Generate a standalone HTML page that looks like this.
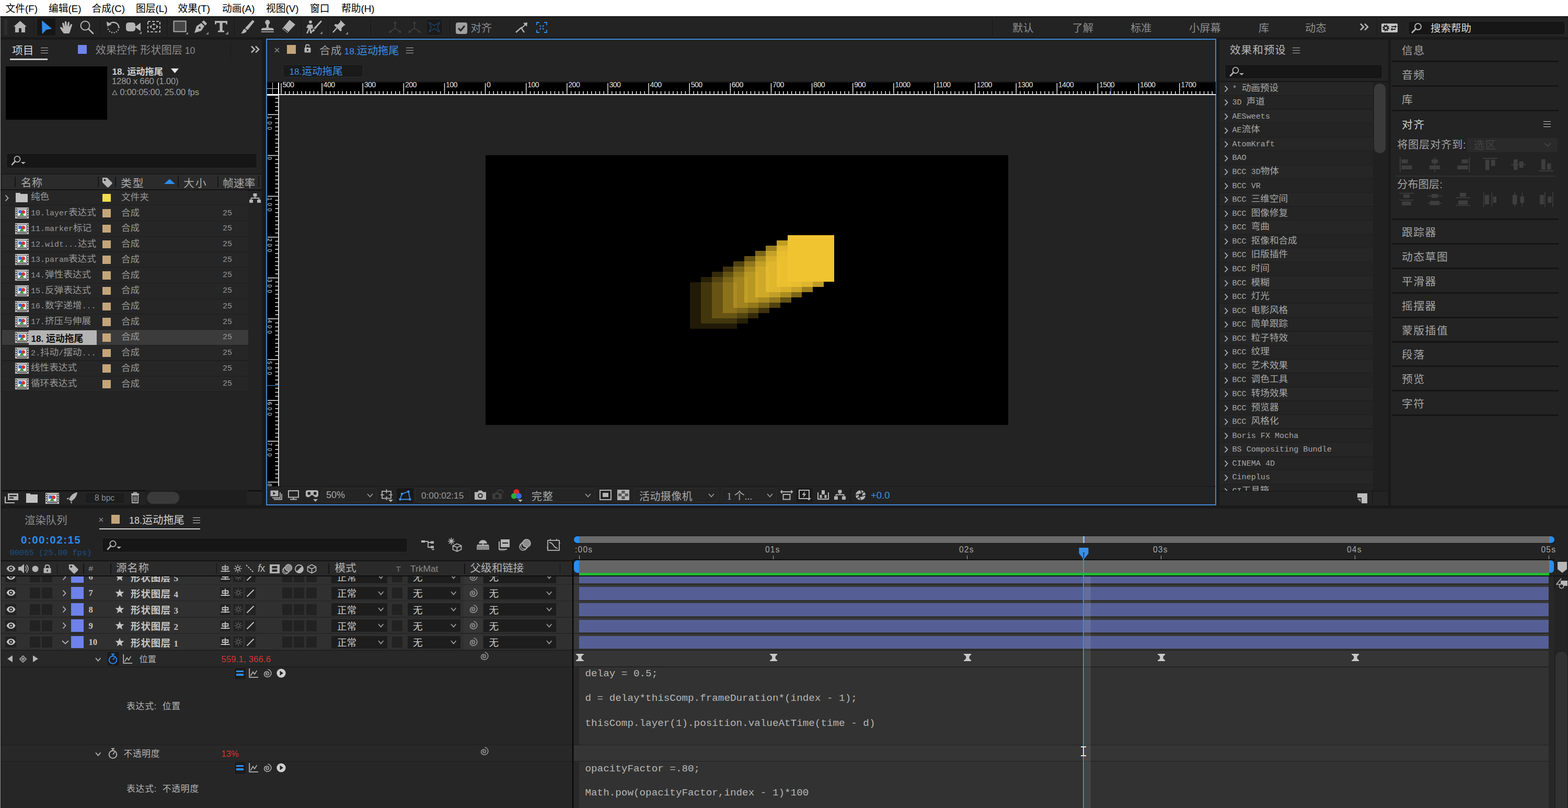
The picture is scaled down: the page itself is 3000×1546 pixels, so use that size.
<!DOCTYPE html>
<html><head><meta charset="utf-8"><title>After Effects</title>
<style>
html,body{margin:0;padding:0;}
html{width:3000px;height:1546px;overflow:hidden;}
body{width:3000px;height:1546px;overflow:hidden;background:#1a1a1a;position:relative;font-family:"Liberation Sans","Noto Sans CJK SC",sans-serif;}
div,svg{position:absolute;box-sizing:border-box;}
.t{white-space:nowrap;overflow:visible;}
.ls{font-family:"Liberation Sans","Noto Sans CJK SC",sans-serif;}
.lm{font-family:"Liberation Mono","Noto Sans CJK SC",monospace;}
.lf{font-family:"Liberation Serif","Noto Sans CJK SC",serif;}
span{font-family:inherit;}
.c{line-height:1;white-space:nowrap;}
</style></head><body>

<div style="left:0.0px;top:0.0px;width:3000.0px;height:32.0px;background:#ffffff;"></div>
<div class="t ls" style="left:10.5px;top:5.0px;height:24.4px;line-height:24.4px;font-size:18.75px;color:#000000;">文件(F)</div>
<div class="t ls" style="left:93.0px;top:5.0px;height:24.4px;line-height:24.4px;font-size:18.75px;color:#000000;">编辑(E)</div>
<div class="t ls" style="left:175.5px;top:5.0px;height:24.4px;line-height:24.4px;font-size:18.75px;color:#000000;">合成(C)</div>
<div class="t ls" style="left:260.0px;top:5.0px;height:24.4px;line-height:24.4px;font-size:18.75px;color:#000000;">图层(L)</div>
<div class="t ls" style="left:340.5px;top:5.0px;height:24.4px;line-height:24.4px;font-size:18.75px;color:#000000;">效果(T)</div>
<div class="t ls" style="left:425.0px;top:5.0px;height:24.4px;line-height:24.4px;font-size:18.75px;color:#000000;">动画(A)</div>
<div class="t ls" style="left:509.0px;top:5.0px;height:24.4px;line-height:24.4px;font-size:18.75px;color:#000000;">视图(V)</div>
<div class="t ls" style="left:593.0px;top:5.0px;height:24.4px;line-height:24.4px;font-size:18.75px;color:#000000;">窗口</div>
<div class="t ls" style="left:653.0px;top:5.0px;height:24.4px;line-height:24.4px;font-size:18.75px;color:#000000;">帮助(H)</div>
<div style="left:0.0px;top:32.0px;width:3000.0px;height:38.5px;background:#232323;"></div>
<div style="left:0.0px;top:31.4px;width:3000.0px;height:1.2px;background:#141414;"></div>
<div style="left:0.0px;top:32.0px;width:1.2px;height:1514.0px;background:#9a9a9a;"></div>
<div style="left:8.0px;top:38.0px;width:5.5px;height:1.1px;background:#404040;"></div>
<div style="left:8.0px;top:41.0px;width:5.5px;height:1.1px;background:#404040;"></div>
<div style="left:8.0px;top:43.9px;width:5.5px;height:1.1px;background:#404040;"></div>
<div style="left:8.0px;top:46.9px;width:5.5px;height:1.1px;background:#404040;"></div>
<div style="left:8.0px;top:49.8px;width:5.5px;height:1.1px;background:#404040;"></div>
<div style="left:8.0px;top:52.8px;width:5.5px;height:1.1px;background:#404040;"></div>
<div style="left:8.0px;top:55.7px;width:5.5px;height:1.1px;background:#404040;"></div>
<div style="left:8.0px;top:58.7px;width:5.5px;height:1.1px;background:#404040;"></div>
<div style="left:8.0px;top:61.6px;width:5.5px;height:1.1px;background:#404040;"></div>
<div style="left:8.0px;top:64.5px;width:5.5px;height:1.1px;background:#404040;"></div>
<div style="left:64.0px;top:35.0px;width:2.0px;height:33.0px;background:#1b1b1b;"></div>
<div style="left:66.0px;top:35.0px;width:1.0px;height:33.0px;background:#2b2b2b;"></div>
<div style="left:191.0px;top:35.0px;width:2.0px;height:33.0px;background:#1b1b1b;"></div>
<div style="left:193.0px;top:35.0px;width:1.0px;height:33.0px;background:#2b2b2b;"></div>
<div style="left:319.0px;top:35.0px;width:2.0px;height:33.0px;background:#1b1b1b;"></div>
<div style="left:321.0px;top:35.0px;width:1.0px;height:33.0px;background:#2b2b2b;"></div>
<div style="left:448.0px;top:35.0px;width:2.0px;height:33.0px;background:#1b1b1b;"></div>
<div style="left:450.0px;top:35.0px;width:1.0px;height:33.0px;background:#2b2b2b;"></div>
<div style="left:575.5px;top:35.0px;width:2.0px;height:33.0px;background:#1b1b1b;"></div>
<div style="left:577.5px;top:35.0px;width:1.0px;height:33.0px;background:#2b2b2b;"></div>
<div style="left:627.0px;top:35.0px;width:2.0px;height:33.0px;background:#1b1b1b;"></div>
<div style="left:629.0px;top:35.0px;width:1.0px;height:33.0px;background:#2b2b2b;"></div>
<div style="left:708.5px;top:35.0px;width:2.0px;height:33.0px;background:#1b1b1b;"></div>
<div style="left:710.5px;top:35.0px;width:1.0px;height:33.0px;background:#2b2b2b;"></div>
<div style="left:860.0px;top:35.0px;width:2.0px;height:33.0px;background:#1b1b1b;"></div>
<div style="left:862.0px;top:35.0px;width:1.0px;height:33.0px;background:#2b2b2b;"></div>
<div style="left:1899.0px;top:35.0px;width:2.0px;height:33.0px;background:#1b1b1b;"></div>
<div style="left:1901.0px;top:35.0px;width:1.0px;height:33.0px;background:#2b2b2b;"></div>
<div style="left:2634.0px;top:35.0px;width:2.0px;height:33.0px;background:#1b1b1b;"></div>
<div style="left:2636.0px;top:35.0px;width:1.0px;height:33.0px;background:#2b2b2b;"></div>
<svg style="left:25.0px;top:39.0px;" width="27" height="24" viewBox="0 0 27 24"><path d="M13.5 1 L1 12 L4 12 L4 23 L11 23 L11 15 L16 15 L16 23 L23 23 L23 12 L26 12 Z" fill="#b4b4b4"/></svg>
<div style="left:71.0px;top:35.0px;width:35.0px;height:33.0px;background:#161616;border-radius:3px;"></div>
<svg style="left:79.0px;top:38.0px;" width="22" height="29" viewBox="0 0 22 29"><path d="M1.1 1 L20.3 17 L9.4 18.9 L1.7 27.2 Z" fill="#2d8ceb"/></svg>
<svg style="left:114.0px;top:39.0px;" width="26" height="26" viewBox="0 0 26 26"><path d="M8 25 C5 21 2 17 1 14 C1 12 3 12 5 14 L7 16 L5 6 C5 4 8 4 8.5 6 L10 12 L10 3 C10 1 13 1 13.3 3 L14 12 L16 4 C16.5 2 19 2.5 19 4.5 L18 13 L21 8 C22 6 24.5 7 24 9 L21 18 C20 22 19 24 18 25 Z" fill="#b4b4b4"/></svg>
<svg style="left:152.0px;top:38.0px;" width="28" height="28" viewBox="0 0 28 28"><circle cx="11" cy="11" r="8.5" fill="none" stroke="#b4b4b4" stroke-width="1.9"/><path d="M17.5 17.5 L26 26" stroke="#b4b4b4" stroke-width="2.8" stroke-linecap="round"/></svg>
<svg style="left:203.0px;top:38.0px;" width="28" height="28" viewBox="0 0 28 28"><path d="M5 10 A10.5 10.5 0 0 1 24.5 14" fill="none" stroke="#b4b4b4" stroke-width="2.4"/><path d="M24.5 14 A10.5 10.5 0 0 1 3.5 14" fill="none" stroke="#b4b4b4" stroke-width="2.4" stroke-dasharray="2 2.6"/><path d="M1 3 L2 12.5 L10.5 9 Z" fill="#b4b4b4"/></svg>
<svg style="left:240.0px;top:40.0px;" width="32" height="26" viewBox="0 0 32 26"><rect x="1" y="3" width="18" height="17" rx="5" fill="#b4b4b4"/><path d="M18 11.5 L29 3.5 L29 19.5 Z" fill="#b4b4b4"/><path d="M31 20 L31 25 L26 25 Z" fill="#8a8a8a"/></svg>
<svg style="left:281.0px;top:38.0px;" width="28" height="27" viewBox="0 0 28 27"><rect x="2" y="3" width="23" height="20" fill="none" stroke="#b4b4b4" stroke-width="2" stroke-dasharray="5 3"/><path d="M13.5 6 L17 10 L10 10 Z M13.5 20 L17 16 L10 16 Z M5 13 L9 9.5 L9 16.5 Z M22 13 L18 9.5 L18 16.5 Z" fill="#b4b4b4"/></svg>
<svg style="left:331.0px;top:39.0px;" width="30" height="28" viewBox="0 0 30 28"><rect x="1.5" y="1.5" width="23" height="20" fill="#454545" stroke="#b4b4b4" stroke-width="1.8"/><path d="M29 22 L29 27 L24 27 Z" fill="#8a8a8a"/></svg>
<svg style="left:370.0px;top:38.0px;" width="30" height="29" viewBox="0 0 30 29"><path d="M2 25 L6 12 L15 6 L21 12 L15 21 Z" fill="#b4b4b4"/><path d="M16 4 L20 1 L26 7 L23 11 Z" fill="#b4b4b4"/><circle cx="12" cy="15" r="2" fill="#232323"/><path d="M29 23 L29 28 L24 28 Z" fill="#8a8a8a"/></svg>
<svg style="left:411.0px;top:39.5px;" width="24" height="22" viewBox="0 0 24 22"><path d="M0 0 H24 V6.5 H21.2 V3.8 H14.6 V18.6 H18 V21.5 H6 V18.6 H9.4 V3.8 H2.8 V6.5 H0 Z" fill="#b4b4b4"/></svg>
<svg style="left:431.0px;top:60.0px;" width="6" height="6" viewBox="0 0 6 6"><path d="M6 0 L6 6 L0 6 Z" fill="#8a8a8a"/></svg>
<svg style="left:460.0px;top:38.0px;" width="27" height="28" viewBox="0 0 27 28"><path d="M23.2 0.3 L26.8 3 L13.8 19.6 L8.8 16 Z" fill="#b4b4b4"/><path d="M8 17 L12 20.5 C11 25 6 26 1 26 C4 24 4 19 8 17 Z" fill="#b4b4b4"/></svg>
<svg style="left:499.0px;top:38.0px;" width="26" height="24" viewBox="0 0 26 24"><circle cx="12.8" cy="4.7" r="4.6" fill="#b4b4b4"/><path d="M10.3 8 L15.3 8 L14.6 12 C14.6 14 15.2 15 17.5 15.6 L8 15.6 C10.4 15 11 14 11 12 Z" fill="#b4b4b4"/><path d="M0.8 20 C0.8 16.6 2.6 15.4 5 15.4 L20.6 15.4 C23 15.4 24.8 16.6 24.8 20 Z" fill="#b4b4b4"/><rect x="0.8" y="22" width="24" height="1.7" fill="#b4b4b4"/></svg>
<svg style="left:537.0px;top:36.0px;" width="30" height="30" viewBox="0 0 30 30"><path d="M17 2 L28 11 L13 27 L3 19 Z" fill="#b4b4b4"/><path d="M5.5 18.5 L13.5 25" stroke="#232323" stroke-width="1.8"/></svg>
<svg style="left:585.0px;top:38.0px;" width="32" height="28" viewBox="0 0 32 28"><circle cx="9" cy="4" r="3" fill="#b4b4b4"/><path d="M4 9 L13 9 L14 16 L10 17 L12 26 L8.5 26 L7 18 L4 26 L1 26 L5 16 L1 15 Z" fill="#b4b4b4"/><path d="M29 1 L31 3 L18 18 L15 16 Z" fill="#b4b4b4"/><path d="M14.5 17 L17.5 19.5 C16 23 13 23 10 23 C12.5 21.5 12.5 18.5 14.5 17Z" fill="#b4b4b4"/><path d="M32 22 L32 27 L27 27 Z" fill="#8a8a8a"/></svg>
<svg style="left:636.0px;top:37.0px;" width="31" height="30" viewBox="0 0 31 30"><path d="M15 1 L25 11 L22 12 L17 17 L18 21 L15.5 23 L3 11 L6 9 L10 10 L15 5 Z" fill="#b4b4b4"/><path d="M8.5 16.5 L1 25" stroke="#b4b4b4" stroke-width="2.4"/><path d="M30 24 L30 29 L25 29 Z" fill="#8a8a8a"/></svg>
<svg style="left:743.0px;top:40.0px;" width="26" height="25" viewBox="0 0 26 25"><path d="M13 2 L13 14 L3 21 M13 14 L23 21" fill="none" stroke="#3e3e3e" stroke-width="1.8"/><path d="M13 0 L16 5 L10 5 Z M1 23 L3 17.5 L6.5 22 Z M25 23 L23 17.5 L19.5 22 Z" fill="#3e3e3e"/></svg>
<svg style="left:780.0px;top:40.0px;" width="26" height="25" viewBox="0 0 26 25"><path d="M13 2 L13 14 L3 21 M13 14 L23 21" fill="none" stroke="#3e3e3e" stroke-width="1.8"/><path d="M13 0 L16 5 L10 5 Z M1 23 L3 17.5 L6.5 22 Z M25 23 L23 17.5 L19.5 22 Z" fill="#3e3e3e"/></svg>
<div style="left:814.5px;top:35.5px;width:32.0px;height:32.0px;background:#1a1a1a;border-radius:3px;border:1px solid #2c2c2c;"></div>
<svg style="left:819.0px;top:40.0px;" width="24" height="23" viewBox="0 0 24 23"><path d="M2 3 L12 9 L22 3 L18 12 L22 21 L12 15 L2 21 L6 12 Z" fill="none" stroke="#1d3f63" stroke-width="1.8"/></svg>
<div style="left:871.5px;top:43.0px;width:22.5px;height:22.0px;background:#a0a0a0;border-radius:4px;"></div>
<svg style="left:875.0px;top:47.0px;" width="16" height="14" viewBox="0 0 16 14"><path d="M2 7 L6.5 11.5 L14 2.5" fill="none" stroke="#232323" stroke-width="3"/></svg>
<div class="t ls" style="left:900.5px;top:41.1px;height:26.4px;line-height:26.4px;font-size:20.3px;color:#8c8c8c;">对齐</div>
<svg style="left:986.0px;top:42.0px;" width="24" height="22" viewBox="0 0 24 22"><path d="M1 20 L11 11 L17 20" fill="none" stroke="#b4b4b4" stroke-width="2.4"/><path d="M12 12 L20 4" stroke="#b4b4b4" stroke-width="2.2"/><path d="M23 1 L22 9 L15 2 Z" fill="#b4b4b4"/></svg>
<svg style="left:1026.0px;top:42.0px;" width="21" height="21" viewBox="0 0 21 21"><path d="M1 6 L1 1 L6 1 M15 1 L20 1 L20 6 M20 15 L20 20 L15 20 M6 20 L1 20 L1 15" fill="none" stroke="#2d8ceb" stroke-width="1.8"/><path d="M6.5 6.5 L9 9 M14.5 6.5 L12 9 M6.5 14.5 L9 12 M14.5 14.5 L12 12" stroke="#2d8ceb" stroke-width="1.8"/></svg>
<div class="t ls" style="left:1937.0px;top:41.1px;height:26.4px;line-height:26.4px;font-size:20.3px;color:#8c8c8c;">默认</div>
<div class="t ls" style="left:2051.5px;top:41.1px;height:26.4px;line-height:26.4px;font-size:20.3px;color:#8c8c8c;">了解</div>
<div class="t ls" style="left:2163.0px;top:41.1px;height:26.4px;line-height:26.4px;font-size:20.3px;color:#8c8c8c;">标准</div>
<div class="t ls" style="left:2275.0px;top:41.1px;height:26.4px;line-height:26.4px;font-size:20.3px;color:#8c8c8c;">小屏幕</div>
<div class="t ls" style="left:2408.0px;top:41.1px;height:26.4px;line-height:26.4px;font-size:20.3px;color:#8c8c8c;">库</div>
<div class="t ls" style="left:2497.0px;top:41.1px;height:26.4px;line-height:26.4px;font-size:20.3px;color:#8c8c8c;">动态</div>
<svg style="left:2601.0px;top:44.0px;" width="19" height="15" viewBox="0 0 19 15"><path d="M2 1.5 L8 7.5 L2 13.5 M10 1.5 L16 7.5 L10 13.5" fill="none" stroke="#b4b4b4" stroke-width="2.6"/></svg>
<div style="left:2642.5px;top:44.5px;width:31.5px;height:17.0px;background:#c4c4c4;border-radius:2px;"></div>
<svg style="left:2642.5px;top:44.5px;" width="32" height="17" viewBox="0 0 32 17"><circle cx="8.5" cy="8.5" r="3.6" fill="none" stroke="#232323" stroke-width="2.6"/><circle cx="8.5" cy="8.5" r="5.6" fill="none" stroke="#232323" stroke-width="2" stroke-dasharray="2.2 2.2"/><path d="M19 6 L27 6 M27 11 L19 11" stroke="#232323" stroke-width="2.2"/><path d="M26 3 L29.5 6 L26 9 Z M21 8 L17.5 11 L21 14 Z" fill="#232323"/></svg>
<div style="left:2693.5px;top:39.5px;width:301.5px;height:27.0px;background:#161616;border-radius:5px;border:1px solid #2e2e2e;"></div>
<svg style="left:2700.0px;top:43.0px;" width="22" height="21" viewBox="0 0 22 21"><circle cx="13" cy="8" r="6" fill="none" stroke="#b4b4b4" stroke-width="2"/><path d="M8.8 12.2 L2 19" stroke="#b4b4b4" stroke-width="3" stroke-linecap="round"/></svg>
<div class="t ls" style="left:2737.0px;top:42.0px;height:25.4px;line-height:25.4px;font-size:19.5px;color:#d8d8d8;">搜索帮助</div>
<div style="left:1.2px;top:76.0px;width:499.8px;height:889.5px;background:#232323;"></div>
<div class="t ls" style="left:23.0px;top:82.9px;height:27.0px;line-height:27.0px;font-size:20.8px;color:#d6d6d6;">项目</div>
<div style="left:78.0px;top:90.6px;width:13.5px;height:1.8px;background:#b0b0b0;"></div>
<div style="left:78.0px;top:95.6px;width:13.5px;height:1.8px;background:#b0b0b0;"></div>
<div style="left:78.0px;top:100.6px;width:13.5px;height:1.8px;background:#b0b0b0;"></div>
<div style="left:19.0px;top:111.5px;width:72.0px;height:3.0px;background:#d0d0d0;"></div>
<div style="left:149.0px;top:86.0px;width:16.5px;height:16.5px;background:#6f84ec;"></div>
<div class="t ls" style="left:182.5px;top:85.8px;height:22.9px;line-height:22.9px;font-size:17.6px;color:#8a8a8a;"><span class="c" style="font-size:20.2px">效果控件</span> <span class="c" style="font-size:20.2px">形状图层</span> 10</div>
<div style="left:440.0px;top:80.0px;width:1.5px;height:32.0px;background:#1e1e1e;"></div>
<svg style="left:479.0px;top:87.0px;" width="19" height="15" viewBox="0 0 19 15"><path d="M2 1.5 L8 7.5 L2 13.5 M10 1.5 L16 7.5 L10 13.5" fill="none" stroke="#b4b4b4" stroke-width="2.6"/></svg>
<div style="left:11.0px;top:127.0px;width:194.0px;height:101.5px;background:#000000;"></div>
<div class="t ls" style="left:214.5px;top:125.8px;height:22.4px;line-height:22.4px;font-size:17.2px;color:#cfcfcf;font-weight:bold;">18. 运动拖尾</div>
<svg style="left:327.0px;top:131.0px;" width="15" height="9" viewBox="0 0 15 9"><path d="M0 0 L15 0 L7.5 9 Z" fill="#e8e8e8"/></svg>
<div class="t ls" style="left:214.0px;top:144.6px;height:21.8px;line-height:21.8px;font-size:16.8px;color:#9c9c9c;letter-spacing:-0.25px;">1280 x 660 (1.00)</div>
<div class="t ls" style="left:214.0px;top:165.6px;height:21.8px;line-height:21.8px;font-size:16.8px;color:#9c9c9c;letter-spacing:-0.3px;"><svg width="11" height="10" viewBox="0 0 11 10" style="position:static;vertical-align:-0.5px"><path d="M5.5 1.2 L10 9.2 L1 9.2 Z" fill="none" stroke="#9c9c9c" stroke-width="1.1"/></svg> 0:00:05:00, 25.00 fps</div>
<div style="left:12.0px;top:293.0px;width:480.0px;height:28.5px;background:#161616;border-radius:5px;border:1px solid #2c2c2c;"></div>
<svg style="left:21.0px;top:297.0px;" width="30" height="20" viewBox="0 0 30 20"><circle cx="12" cy="7.5" r="5.6" fill="none" stroke="#b4b4b4" stroke-width="1.8"/><path d="M8 11.5 L2 18" stroke="#b4b4b4" stroke-width="2.6" stroke-linecap="round"/><path d="M19 13 L28 13 L23.5 17 Z" fill="#b4b4b4"/></svg>
<div style="left:1.2px;top:332.0px;width:499.8px;height:2.0px;background:#1a1a1a;"></div>
<div style="left:4.0px;top:334.0px;width:496.0px;height:28.0px;background:#2b2b2b;"></div>
<div style="left:1.2px;top:362.0px;width:499.8px;height:2.5px;background:#151515;"></div>
<div style="left:28.0px;top:338.0px;width:1.5px;height:20.0px;background:#161616;"></div>
<div style="left:187.0px;top:338.0px;width:1.5px;height:20.0px;background:#161616;"></div>
<div style="left:220.0px;top:338.0px;width:1.5px;height:20.0px;background:#161616;"></div>
<div style="left:340.0px;top:338.0px;width:1.5px;height:20.0px;background:#161616;"></div>
<div style="left:416.0px;top:338.0px;width:1.5px;height:20.0px;background:#161616;"></div>
<div style="left:494.0px;top:338.0px;width:1.5px;height:20.0px;background:#161616;"></div>
<div class="t ls" style="left:40.0px;top:337.1px;height:26.4px;line-height:26.4px;font-size:20.3px;color:#a8a8a8;letter-spacing:0.5px;">名称</div>
<svg style="left:193.5px;top:337.5px;" width="22.0" height="22.0" viewBox="0 0 22 22"><path d="M2 2 L11 2 L20 11 C21 12 21 13 20 14 L14 20 C13 21 12 21 11 20 L2 11 Z" fill="#b4b4b4"/><circle cx="6.5" cy="6.5" r="2" fill="#2b2b2b"/></svg>
<div class="t ls" style="left:231.0px;top:336.9px;height:27.0px;line-height:27.0px;font-size:20.8px;color:#a8a8a8;letter-spacing:2px;">类型</div>
<svg style="left:314.0px;top:342.0px;" width="21" height="10" viewBox="0 0 21 10"><path d="M0 10 L10.5 0.5 L21 10 Z" fill="#2d8ceb"/></svg>
<div class="t ls" style="left:351.0px;top:336.9px;height:27.0px;line-height:27.0px;font-size:20.8px;color:#a8a8a8;letter-spacing:2px;">大小</div>
<div class="t ls" style="left:426.0px;top:336.9px;height:27.0px;line-height:27.0px;font-size:20.8px;color:#a8a8a8;">帧速率</div>
<div style="left:4.0px;top:363.6px;width:470.0px;height:29.7px;background:#262626;"></div>
<div style="left:4.0px;top:392.2px;width:470.0px;height:1.2px;background:#1e1e1e;"></div>
<svg style="left:9.0px;top:371.5px;" width="8" height="14" viewBox="0 0 8 14"><path d="M1.5 1.5 L6.5 7 L1.5 12.5" fill="none" stroke="#b4b4b4" stroke-width="1.8"/></svg>
<svg style="left:29.5px;top:367.5px;" width="23" height="19" viewBox="0 0 23 19"><path d="M0 1 L9 1 L9 3 L23 3 L23 19 L0 19 Z" fill="#c2c2c2"/></svg>
<div style="left:196.0px;top:370.5px;width:15.5px;height:15.5px;background:#f0dc4e;"></div>
<div class="t lm" style="left:59.0px;top:369.4px;height:19.5px;line-height:19.5px;font-size:15px;color:#989898;"><span class="c" style="font-size:17.6px">纯色</span></div>
<div class="t lm" style="left:232.0px;top:367.9px;height:22.4px;line-height:22.4px;font-size:17.2px;color:#989898;"><span class="c" style="font-size:17.6px">文件夹</span></div>
<svg style="left:477.0px;top:369.5px;" width="22" height="19" viewBox="0 0 22 19"><rect x="7.5" y="0" width="7" height="6" fill="#b4b4b4"/><rect x="0" y="12" width="7" height="6" fill="#b4b4b4"/><rect x="15" y="12" width="7" height="6" fill="#b4b4b4"/><path d="M11 6 L11 9 M3.5 12 L3.5 9 L18.5 9 L18.5 12" fill="none" stroke="#b4b4b4" stroke-width="1.8"/></svg>
<div style="left:4.0px;top:393.4px;width:470.0px;height:29.7px;background:#262626;"></div>
<div style="left:4.0px;top:421.9px;width:470.0px;height:1.2px;background:#1e1e1e;"></div>
<svg style="left:28.5px;top:397.2px;" width="26" height="21" viewBox="0 0 26 21"><rect x="0" y="0" width="26" height="21" fill="#c8c8c8"/><rect x="4.5" y="3" width="17" height="13.5" fill="#f2f2f2" stroke="#555" stroke-width="1"/><rect x="1" y="1.5" width="2" height="2.5" fill="#333"/><rect x="1" y="6" width="2" height="2.5" fill="#333"/><rect x="1" y="10.5" width="2" height="2.5" fill="#333"/><rect x="1" y="15" width="2" height="2.5" fill="#333"/><rect x="23" y="1.5" width="2" height="2.5" fill="#333"/><rect x="23" y="6" width="2" height="2.5" fill="#333"/><rect x="23" y="10.5" width="2" height="2.5" fill="#333"/><rect x="23" y="15" width="2" height="2.5" fill="#333"/><rect x="6.5" y="5" width="6" height="6" fill="#2a6fd6"/><circle cx="15.5" cy="8.5" r="3.6" fill="#d83030"/><path d="M8 15.5 L12.5 9.5 L17 15.5 Z" fill="#2f9a3a"/><rect x="3" y="18" width="20" height="1.6" fill="#444"/></svg>
<div style="left:196.0px;top:400.2px;width:15.5px;height:15.5px;background:#c4a57a;"></div>
<div class="t lm" style="left:59.0px;top:399.1px;height:19.5px;line-height:19.5px;font-size:15px;color:#989898;">10.layer<span class="c" style="font-size:17.6px">表达式</span></div>
<div class="t lm" style="left:232.0px;top:397.6px;height:22.4px;line-height:22.4px;font-size:17.2px;color:#989898;"><span class="c" style="font-size:17.6px">合成</span></div>
<div class="t lm" style="left:426.0px;top:398.5px;height:19.5px;line-height:19.5px;font-size:15px;color:#989898;">25</div>
<div style="left:4.0px;top:423.1px;width:470.0px;height:29.7px;background:#262626;"></div>
<div style="left:4.0px;top:451.6px;width:470.0px;height:1.2px;background:#1e1e1e;"></div>
<svg style="left:28.5px;top:426.9px;" width="26" height="21" viewBox="0 0 26 21"><rect x="0" y="0" width="26" height="21" fill="#c8c8c8"/><rect x="4.5" y="3" width="17" height="13.5" fill="#f2f2f2" stroke="#555" stroke-width="1"/><rect x="1" y="1.5" width="2" height="2.5" fill="#333"/><rect x="1" y="6" width="2" height="2.5" fill="#333"/><rect x="1" y="10.5" width="2" height="2.5" fill="#333"/><rect x="1" y="15" width="2" height="2.5" fill="#333"/><rect x="23" y="1.5" width="2" height="2.5" fill="#333"/><rect x="23" y="6" width="2" height="2.5" fill="#333"/><rect x="23" y="10.5" width="2" height="2.5" fill="#333"/><rect x="23" y="15" width="2" height="2.5" fill="#333"/><rect x="6.5" y="5" width="6" height="6" fill="#2a6fd6"/><circle cx="15.5" cy="8.5" r="3.6" fill="#d83030"/><path d="M8 15.5 L12.5 9.5 L17 15.5 Z" fill="#2f9a3a"/><rect x="3" y="18" width="20" height="1.6" fill="#444"/></svg>
<div style="left:196.0px;top:429.9px;width:15.5px;height:15.5px;background:#c4a57a;"></div>
<div class="t lm" style="left:59.0px;top:428.8px;height:19.5px;line-height:19.5px;font-size:15px;color:#989898;">11.marker<span class="c" style="font-size:17.6px">标记</span></div>
<div class="t lm" style="left:232.0px;top:427.3px;height:22.4px;line-height:22.4px;font-size:17.2px;color:#989898;"><span class="c" style="font-size:17.6px">合成</span></div>
<div class="t lm" style="left:426.0px;top:428.2px;height:19.5px;line-height:19.5px;font-size:15px;color:#989898;">25</div>
<div style="left:4.0px;top:452.8px;width:470.0px;height:29.7px;background:#262626;"></div>
<div style="left:4.0px;top:481.3px;width:470.0px;height:1.2px;background:#1e1e1e;"></div>
<svg style="left:28.5px;top:456.7px;" width="26" height="21" viewBox="0 0 26 21"><rect x="0" y="0" width="26" height="21" fill="#c8c8c8"/><rect x="4.5" y="3" width="17" height="13.5" fill="#f2f2f2" stroke="#555" stroke-width="1"/><rect x="1" y="1.5" width="2" height="2.5" fill="#333"/><rect x="1" y="6" width="2" height="2.5" fill="#333"/><rect x="1" y="10.5" width="2" height="2.5" fill="#333"/><rect x="1" y="15" width="2" height="2.5" fill="#333"/><rect x="23" y="1.5" width="2" height="2.5" fill="#333"/><rect x="23" y="6" width="2" height="2.5" fill="#333"/><rect x="23" y="10.5" width="2" height="2.5" fill="#333"/><rect x="23" y="15" width="2" height="2.5" fill="#333"/><rect x="6.5" y="5" width="6" height="6" fill="#2a6fd6"/><circle cx="15.5" cy="8.5" r="3.6" fill="#d83030"/><path d="M8 15.5 L12.5 9.5 L17 15.5 Z" fill="#2f9a3a"/><rect x="3" y="18" width="20" height="1.6" fill="#444"/></svg>
<div style="left:196.0px;top:459.7px;width:15.5px;height:15.5px;background:#c4a57a;"></div>
<div class="t lm" style="left:59.0px;top:458.5px;height:19.5px;line-height:19.5px;font-size:15px;color:#989898;">12.widt...<span class="c" style="font-size:17.6px">达式</span></div>
<div class="t lm" style="left:232.0px;top:457.1px;height:22.4px;line-height:22.4px;font-size:17.2px;color:#989898;"><span class="c" style="font-size:17.6px">合成</span></div>
<div class="t lm" style="left:426.0px;top:457.9px;height:19.5px;line-height:19.5px;font-size:15px;color:#989898;">25</div>
<div style="left:4.0px;top:482.5px;width:470.0px;height:29.7px;background:#262626;"></div>
<div style="left:4.0px;top:511.0px;width:470.0px;height:1.2px;background:#1e1e1e;"></div>
<svg style="left:28.5px;top:486.4px;" width="26" height="21" viewBox="0 0 26 21"><rect x="0" y="0" width="26" height="21" fill="#c8c8c8"/><rect x="4.5" y="3" width="17" height="13.5" fill="#f2f2f2" stroke="#555" stroke-width="1"/><rect x="1" y="1.5" width="2" height="2.5" fill="#333"/><rect x="1" y="6" width="2" height="2.5" fill="#333"/><rect x="1" y="10.5" width="2" height="2.5" fill="#333"/><rect x="1" y="15" width="2" height="2.5" fill="#333"/><rect x="23" y="1.5" width="2" height="2.5" fill="#333"/><rect x="23" y="6" width="2" height="2.5" fill="#333"/><rect x="23" y="10.5" width="2" height="2.5" fill="#333"/><rect x="23" y="15" width="2" height="2.5" fill="#333"/><rect x="6.5" y="5" width="6" height="6" fill="#2a6fd6"/><circle cx="15.5" cy="8.5" r="3.6" fill="#d83030"/><path d="M8 15.5 L12.5 9.5 L17 15.5 Z" fill="#2f9a3a"/><rect x="3" y="18" width="20" height="1.6" fill="#444"/></svg>
<div style="left:196.0px;top:489.4px;width:15.5px;height:15.5px;background:#c4a57a;"></div>
<div class="t lm" style="left:59.0px;top:488.2px;height:19.5px;line-height:19.5px;font-size:15px;color:#989898;">13.param<span class="c" style="font-size:17.6px">表达式</span></div>
<div class="t lm" style="left:232.0px;top:486.8px;height:22.4px;line-height:22.4px;font-size:17.2px;color:#989898;"><span class="c" style="font-size:17.6px">合成</span></div>
<div class="t lm" style="left:426.0px;top:487.6px;height:19.5px;line-height:19.5px;font-size:15px;color:#989898;">25</div>
<div style="left:4.0px;top:512.2px;width:470.0px;height:29.7px;background:#262626;"></div>
<div style="left:4.0px;top:540.8px;width:470.0px;height:1.2px;background:#1e1e1e;"></div>
<svg style="left:28.5px;top:516.1px;" width="26" height="21" viewBox="0 0 26 21"><rect x="0" y="0" width="26" height="21" fill="#c8c8c8"/><rect x="4.5" y="3" width="17" height="13.5" fill="#f2f2f2" stroke="#555" stroke-width="1"/><rect x="1" y="1.5" width="2" height="2.5" fill="#333"/><rect x="1" y="6" width="2" height="2.5" fill="#333"/><rect x="1" y="10.5" width="2" height="2.5" fill="#333"/><rect x="1" y="15" width="2" height="2.5" fill="#333"/><rect x="23" y="1.5" width="2" height="2.5" fill="#333"/><rect x="23" y="6" width="2" height="2.5" fill="#333"/><rect x="23" y="10.5" width="2" height="2.5" fill="#333"/><rect x="23" y="15" width="2" height="2.5" fill="#333"/><rect x="6.5" y="5" width="6" height="6" fill="#2a6fd6"/><circle cx="15.5" cy="8.5" r="3.6" fill="#d83030"/><path d="M8 15.5 L12.5 9.5 L17 15.5 Z" fill="#2f9a3a"/><rect x="3" y="18" width="20" height="1.6" fill="#444"/></svg>
<div style="left:196.0px;top:519.1px;width:15.5px;height:15.5px;background:#c4a57a;"></div>
<div class="t lm" style="left:59.0px;top:518.0px;height:19.5px;line-height:19.5px;font-size:15px;color:#989898;">14.<span class="c" style="font-size:17.6px">弹性表达式</span></div>
<div class="t lm" style="left:232.0px;top:516.5px;height:22.4px;line-height:22.4px;font-size:17.2px;color:#989898;"><span class="c" style="font-size:17.6px">合成</span></div>
<div class="t lm" style="left:426.0px;top:517.4px;height:19.5px;line-height:19.5px;font-size:15px;color:#989898;">25</div>
<div style="left:4.0px;top:542.0px;width:470.0px;height:29.7px;background:#262626;"></div>
<div style="left:4.0px;top:570.5px;width:470.0px;height:1.2px;background:#1e1e1e;"></div>
<svg style="left:28.5px;top:545.8px;" width="26" height="21" viewBox="0 0 26 21"><rect x="0" y="0" width="26" height="21" fill="#c8c8c8"/><rect x="4.5" y="3" width="17" height="13.5" fill="#f2f2f2" stroke="#555" stroke-width="1"/><rect x="1" y="1.5" width="2" height="2.5" fill="#333"/><rect x="1" y="6" width="2" height="2.5" fill="#333"/><rect x="1" y="10.5" width="2" height="2.5" fill="#333"/><rect x="1" y="15" width="2" height="2.5" fill="#333"/><rect x="23" y="1.5" width="2" height="2.5" fill="#333"/><rect x="23" y="6" width="2" height="2.5" fill="#333"/><rect x="23" y="10.5" width="2" height="2.5" fill="#333"/><rect x="23" y="15" width="2" height="2.5" fill="#333"/><rect x="6.5" y="5" width="6" height="6" fill="#2a6fd6"/><circle cx="15.5" cy="8.5" r="3.6" fill="#d83030"/><path d="M8 15.5 L12.5 9.5 L17 15.5 Z" fill="#2f9a3a"/><rect x="3" y="18" width="20" height="1.6" fill="#444"/></svg>
<div style="left:196.0px;top:548.8px;width:15.5px;height:15.5px;background:#c4a57a;"></div>
<div class="t lm" style="left:59.0px;top:547.7px;height:19.5px;line-height:19.5px;font-size:15px;color:#989898;">15.<span class="c" style="font-size:17.6px">反弹表达式</span></div>
<div class="t lm" style="left:232.0px;top:546.2px;height:22.4px;line-height:22.4px;font-size:17.2px;color:#989898;"><span class="c" style="font-size:17.6px">合成</span></div>
<div class="t lm" style="left:426.0px;top:547.1px;height:19.5px;line-height:19.5px;font-size:15px;color:#989898;">25</div>
<div style="left:4.0px;top:571.7px;width:470.0px;height:29.7px;background:#262626;"></div>
<div style="left:4.0px;top:600.2px;width:470.0px;height:1.2px;background:#1e1e1e;"></div>
<svg style="left:28.5px;top:575.5px;" width="26" height="21" viewBox="0 0 26 21"><rect x="0" y="0" width="26" height="21" fill="#c8c8c8"/><rect x="4.5" y="3" width="17" height="13.5" fill="#f2f2f2" stroke="#555" stroke-width="1"/><rect x="1" y="1.5" width="2" height="2.5" fill="#333"/><rect x="1" y="6" width="2" height="2.5" fill="#333"/><rect x="1" y="10.5" width="2" height="2.5" fill="#333"/><rect x="1" y="15" width="2" height="2.5" fill="#333"/><rect x="23" y="1.5" width="2" height="2.5" fill="#333"/><rect x="23" y="6" width="2" height="2.5" fill="#333"/><rect x="23" y="10.5" width="2" height="2.5" fill="#333"/><rect x="23" y="15" width="2" height="2.5" fill="#333"/><rect x="6.5" y="5" width="6" height="6" fill="#2a6fd6"/><circle cx="15.5" cy="8.5" r="3.6" fill="#d83030"/><path d="M8 15.5 L12.5 9.5 L17 15.5 Z" fill="#2f9a3a"/><rect x="3" y="18" width="20" height="1.6" fill="#444"/></svg>
<div style="left:196.0px;top:578.5px;width:15.5px;height:15.5px;background:#c4a57a;"></div>
<div class="t lm" style="left:59.0px;top:577.4px;height:19.5px;line-height:19.5px;font-size:15px;color:#989898;">16.<span class="c" style="font-size:17.6px">数字递增</span>...</div>
<div class="t lm" style="left:232.0px;top:575.9px;height:22.4px;line-height:22.4px;font-size:17.2px;color:#989898;"><span class="c" style="font-size:17.6px">合成</span></div>
<div class="t lm" style="left:426.0px;top:576.8px;height:19.5px;line-height:19.5px;font-size:15px;color:#989898;">25</div>
<div style="left:4.0px;top:601.4px;width:470.0px;height:29.7px;background:#262626;"></div>
<div style="left:4.0px;top:629.9px;width:470.0px;height:1.2px;background:#1e1e1e;"></div>
<svg style="left:28.5px;top:605.3px;" width="26" height="21" viewBox="0 0 26 21"><rect x="0" y="0" width="26" height="21" fill="#c8c8c8"/><rect x="4.5" y="3" width="17" height="13.5" fill="#f2f2f2" stroke="#555" stroke-width="1"/><rect x="1" y="1.5" width="2" height="2.5" fill="#333"/><rect x="1" y="6" width="2" height="2.5" fill="#333"/><rect x="1" y="10.5" width="2" height="2.5" fill="#333"/><rect x="1" y="15" width="2" height="2.5" fill="#333"/><rect x="23" y="1.5" width="2" height="2.5" fill="#333"/><rect x="23" y="6" width="2" height="2.5" fill="#333"/><rect x="23" y="10.5" width="2" height="2.5" fill="#333"/><rect x="23" y="15" width="2" height="2.5" fill="#333"/><rect x="6.5" y="5" width="6" height="6" fill="#2a6fd6"/><circle cx="15.5" cy="8.5" r="3.6" fill="#d83030"/><path d="M8 15.5 L12.5 9.5 L17 15.5 Z" fill="#2f9a3a"/><rect x="3" y="18" width="20" height="1.6" fill="#444"/></svg>
<div style="left:196.0px;top:608.3px;width:15.5px;height:15.5px;background:#c4a57a;"></div>
<div class="t lm" style="left:59.0px;top:607.1px;height:19.5px;line-height:19.5px;font-size:15px;color:#989898;">17.<span class="c" style="font-size:17.6px">挤压与伸展</span></div>
<div class="t lm" style="left:232.0px;top:605.7px;height:22.4px;line-height:22.4px;font-size:17.2px;color:#989898;"><span class="c" style="font-size:17.6px">合成</span></div>
<div class="t lm" style="left:426.0px;top:606.5px;height:19.5px;line-height:19.5px;font-size:15px;color:#989898;">25</div>
<div style="left:4.0px;top:631.1px;width:471.0px;height:29.7px;background:#3b3b3b;"></div>
<div style="left:4.0px;top:659.6px;width:470.0px;height:1.2px;background:#1e1e1e;"></div>
<svg style="left:28.5px;top:635.0px;" width="26" height="21" viewBox="0 0 26 21"><rect x="0" y="0" width="26" height="21" fill="#c8c8c8"/><rect x="4.5" y="3" width="17" height="13.5" fill="#f2f2f2" stroke="#555" stroke-width="1"/><rect x="1" y="1.5" width="2" height="2.5" fill="#333"/><rect x="1" y="6" width="2" height="2.5" fill="#333"/><rect x="1" y="10.5" width="2" height="2.5" fill="#333"/><rect x="1" y="15" width="2" height="2.5" fill="#333"/><rect x="23" y="1.5" width="2" height="2.5" fill="#333"/><rect x="23" y="6" width="2" height="2.5" fill="#333"/><rect x="23" y="10.5" width="2" height="2.5" fill="#333"/><rect x="23" y="15" width="2" height="2.5" fill="#333"/><rect x="6.5" y="5" width="6" height="6" fill="#2a6fd6"/><circle cx="15.5" cy="8.5" r="3.6" fill="#d83030"/><path d="M8 15.5 L12.5 9.5 L17 15.5 Z" fill="#2f9a3a"/><rect x="3" y="18" width="20" height="1.6" fill="#444"/></svg>
<div style="left:196.0px;top:638.0px;width:15.5px;height:15.5px;background:#c4a57a;"></div>
<div style="left:55.0px;top:631.6px;width:130.0px;height:28.2px;background:#b4b4b4;"></div>
<div class="t ls" style="left:59.5px;top:636.6px;height:22.4px;line-height:22.4px;font-size:17.2px;color:#0a0a0a;font-weight:bold;">18. <span class="c" style="font-size:17.8px">运动拖尾</span></div>
<div class="t lm" style="left:232.0px;top:635.4px;height:22.4px;line-height:22.4px;font-size:17.2px;color:#989898;"><span class="c" style="font-size:17.6px">合成</span></div>
<div class="t lm" style="left:426.0px;top:636.2px;height:19.5px;line-height:19.5px;font-size:15px;color:#989898;">25</div>
<div style="left:4.0px;top:660.8px;width:470.0px;height:29.7px;background:#262626;"></div>
<div style="left:4.0px;top:689.4px;width:470.0px;height:1.2px;background:#1e1e1e;"></div>
<svg style="left:28.5px;top:664.7px;" width="26" height="21" viewBox="0 0 26 21"><rect x="0" y="0" width="26" height="21" fill="#c8c8c8"/><rect x="4.5" y="3" width="17" height="13.5" fill="#f2f2f2" stroke="#555" stroke-width="1"/><rect x="1" y="1.5" width="2" height="2.5" fill="#333"/><rect x="1" y="6" width="2" height="2.5" fill="#333"/><rect x="1" y="10.5" width="2" height="2.5" fill="#333"/><rect x="1" y="15" width="2" height="2.5" fill="#333"/><rect x="23" y="1.5" width="2" height="2.5" fill="#333"/><rect x="23" y="6" width="2" height="2.5" fill="#333"/><rect x="23" y="10.5" width="2" height="2.5" fill="#333"/><rect x="23" y="15" width="2" height="2.5" fill="#333"/><rect x="6.5" y="5" width="6" height="6" fill="#2a6fd6"/><circle cx="15.5" cy="8.5" r="3.6" fill="#d83030"/><path d="M8 15.5 L12.5 9.5 L17 15.5 Z" fill="#2f9a3a"/><rect x="3" y="18" width="20" height="1.6" fill="#444"/></svg>
<div style="left:196.0px;top:667.7px;width:15.5px;height:15.5px;background:#c4a57a;"></div>
<div class="t lm" style="left:59.0px;top:666.6px;height:19.5px;line-height:19.5px;font-size:15px;color:#989898;">2.<span class="c" style="font-size:17.6px">抖动</span>/<span class="c" style="font-size:17.6px">摆动</span>...</div>
<div class="t lm" style="left:232.0px;top:665.1px;height:22.4px;line-height:22.4px;font-size:17.2px;color:#989898;"><span class="c" style="font-size:17.6px">合成</span></div>
<div class="t lm" style="left:426.0px;top:666.0px;height:19.5px;line-height:19.5px;font-size:15px;color:#989898;">25</div>
<div style="left:4.0px;top:690.6px;width:470.0px;height:29.7px;background:#262626;"></div>
<div style="left:4.0px;top:719.1px;width:470.0px;height:1.2px;background:#1e1e1e;"></div>
<svg style="left:28.5px;top:694.4px;" width="26" height="21" viewBox="0 0 26 21"><rect x="0" y="0" width="26" height="21" fill="#c8c8c8"/><rect x="4.5" y="3" width="17" height="13.5" fill="#f2f2f2" stroke="#555" stroke-width="1"/><rect x="1" y="1.5" width="2" height="2.5" fill="#333"/><rect x="1" y="6" width="2" height="2.5" fill="#333"/><rect x="1" y="10.5" width="2" height="2.5" fill="#333"/><rect x="1" y="15" width="2" height="2.5" fill="#333"/><rect x="23" y="1.5" width="2" height="2.5" fill="#333"/><rect x="23" y="6" width="2" height="2.5" fill="#333"/><rect x="23" y="10.5" width="2" height="2.5" fill="#333"/><rect x="23" y="15" width="2" height="2.5" fill="#333"/><rect x="6.5" y="5" width="6" height="6" fill="#2a6fd6"/><circle cx="15.5" cy="8.5" r="3.6" fill="#d83030"/><path d="M8 15.5 L12.5 9.5 L17 15.5 Z" fill="#2f9a3a"/><rect x="3" y="18" width="20" height="1.6" fill="#444"/></svg>
<div style="left:196.0px;top:697.4px;width:15.5px;height:15.5px;background:#c4a57a;"></div>
<div class="t lm" style="left:59.0px;top:696.3px;height:19.5px;line-height:19.5px;font-size:15px;color:#989898;"><span class="c" style="font-size:17.6px">线性表达式</span></div>
<div class="t lm" style="left:232.0px;top:694.8px;height:22.4px;line-height:22.4px;font-size:17.2px;color:#989898;"><span class="c" style="font-size:17.6px">合成</span></div>
<div class="t lm" style="left:426.0px;top:695.7px;height:19.5px;line-height:19.5px;font-size:15px;color:#989898;">25</div>
<div style="left:4.0px;top:720.3px;width:470.0px;height:29.7px;background:#262626;"></div>
<div style="left:4.0px;top:748.8px;width:470.0px;height:1.2px;background:#1e1e1e;"></div>
<svg style="left:28.5px;top:724.1px;" width="26" height="21" viewBox="0 0 26 21"><rect x="0" y="0" width="26" height="21" fill="#c8c8c8"/><rect x="4.5" y="3" width="17" height="13.5" fill="#f2f2f2" stroke="#555" stroke-width="1"/><rect x="1" y="1.5" width="2" height="2.5" fill="#333"/><rect x="1" y="6" width="2" height="2.5" fill="#333"/><rect x="1" y="10.5" width="2" height="2.5" fill="#333"/><rect x="1" y="15" width="2" height="2.5" fill="#333"/><rect x="23" y="1.5" width="2" height="2.5" fill="#333"/><rect x="23" y="6" width="2" height="2.5" fill="#333"/><rect x="23" y="10.5" width="2" height="2.5" fill="#333"/><rect x="23" y="15" width="2" height="2.5" fill="#333"/><rect x="6.5" y="5" width="6" height="6" fill="#2a6fd6"/><circle cx="15.5" cy="8.5" r="3.6" fill="#d83030"/><path d="M8 15.5 L12.5 9.5 L17 15.5 Z" fill="#2f9a3a"/><rect x="3" y="18" width="20" height="1.6" fill="#444"/></svg>
<div style="left:196.0px;top:727.1px;width:15.5px;height:15.5px;background:#c4a57a;"></div>
<div class="t lm" style="left:59.0px;top:726.0px;height:19.5px;line-height:19.5px;font-size:15px;color:#989898;"><span class="c" style="font-size:17.6px">循环表达式</span></div>
<div class="t lm" style="left:232.0px;top:724.5px;height:22.4px;line-height:22.4px;font-size:17.2px;color:#989898;"><span class="c" style="font-size:17.6px">合成</span></div>
<div class="t lm" style="left:426.0px;top:725.4px;height:19.5px;line-height:19.5px;font-size:15px;color:#989898;">25</div>
<div style="left:279.0px;top:938.2px;width:193.0px;height:27.3px;background:#1e1e1e;"></div>
<div style="left:4.0px;top:938.0px;width:275.0px;height:1.6px;background:#0c0c0c;"></div>
<div style="left:474.0px;top:938.4px;width:27.0px;height:1.8px;background:#0a0a0a;"></div>
<svg style="left:8.0px;top:942.0px;" width="28" height="22" viewBox="0 0 28 22"><path d="M2 8 L2 20 L20 20" fill="none" stroke="#b4b4b4" stroke-width="2.2"/><rect x="7" y="2" width="20" height="13" fill="#b4b4b4"/><rect x="10" y="5" width="14" height="2.5" fill="#232323"/><rect x="10" y="9.5" width="8" height="2.5" fill="#232323"/></svg>
<svg style="left:50.0px;top:943.0px;" width="22" height="19" viewBox="0 0 22 19"><path d="M0 1 L8 1 L8 3 L22 3 L22 19 L0 19 Z" fill="#c2c2c2"/></svg>
<svg style="left:86.5px;top:942.5px;" width="26" height="21" viewBox="0 0 26 21"><rect x="0" y="0" width="26" height="21" fill="#c8c8c8"/><rect x="4.5" y="3" width="17" height="13.5" fill="#f2f2f2" stroke="#555" stroke-width="1"/><rect x="1" y="1.5" width="2" height="2.5" fill="#333"/><rect x="1" y="6" width="2" height="2.5" fill="#333"/><rect x="1" y="10.5" width="2" height="2.5" fill="#333"/><rect x="1" y="15" width="2" height="2.5" fill="#333"/><rect x="23" y="1.5" width="2" height="2.5" fill="#333"/><rect x="23" y="6" width="2" height="2.5" fill="#333"/><rect x="23" y="10.5" width="2" height="2.5" fill="#333"/><rect x="23" y="15" width="2" height="2.5" fill="#333"/><rect x="6.5" y="5" width="6" height="6" fill="#2a6fd6"/><circle cx="15.5" cy="8.5" r="3.6" fill="#d83030"/><path d="M8 15.5 L12.5 9.5 L17 15.5 Z" fill="#2f9a3a"/><rect x="3" y="18" width="20" height="1.6" fill="#444"/></svg>
<svg style="left:127.0px;top:941.0px;" width="22" height="23" viewBox="0 0 22 23"><path d="M21 1 C13 2 7 8 5 15 L9 18 C15 15 20 9 21 1 Z" fill="#b4b4b4"/><path d="M5 11 L0 13 L3.5 15 Z M11 18.5 L10 23 L7.5 19.5 Z" fill="#b4b4b4"/></svg>
<div style="left:162.0px;top:941.5px;width:76.5px;height:22.0px;background:#1d1d1d;border-radius:4px;border:1px solid #2a2a2a;"></div>
<div class="t ls" style="left:181.0px;top:942.9px;height:20.3px;line-height:20.3px;font-size:15.6px;color:#8a8a8a;">8 bpc</div>
<svg style="left:250.0px;top:941.0px;" width="17" height="22" viewBox="0 0 17 22"><path d="M1 4 L16 4 M6 4 L6 1.5 L11 1.5 L11 4" fill="none" stroke="#b4b4b4" stroke-width="1.8"/><path d="M2.5 6 L14.5 6 L14 21 L3 21 Z" fill="none" stroke="#b4b4b4" stroke-width="1.8"/><path d="M6 8.5 L6 18.5 M8.5 8.5 L8.5 18.5 M11 8.5 L11 18.5" stroke="#b4b4b4" stroke-width="1.3"/></svg>
<div style="left:281.0px;top:940.5px;width:62.0px;height:23.0px;background:#3a3a3a;border-radius:11.5px;"></div>
<div style="left:509.0px;top:74.2px;width:1817.6px;height:892.8px;background:#232323;border:2.2px solid #4286d6;"></div>
<svg style="left:525.0px;top:91.0px;" width="10" height="10" viewBox="0 0 10 10"><path d="M1 1 L9 9 M9 1 L1 9" stroke="#8a8a8a" stroke-width="1.6"/></svg>
<div style="left:549.0px;top:86.0px;width:16.5px;height:16.5px;background:#c4a57a;"></div>
<svg style="left:582.0px;top:84.0px;" width="14" height="17" viewBox="0 0 14 17"><rect x="0.5" y="7" width="12" height="9.5" rx="1" fill="#b4b4b4"/><path d="M3 7 L3 4.5 C3 0.5 9.5 0.5 9.5 4.5" fill="none" stroke="#b4b4b4" stroke-width="2"/><rect x="5" y="10" width="3" height="3.5" fill="#232323"/></svg>
<div class="t ls" style="left:611.0px;top:83.4px;height:27.0px;line-height:27.0px;font-size:20.8px;color:#9a9a9a;letter-spacing:1px;">合成</div>
<div class="t ls" style="left:658.5px;top:86.5px;height:22.6px;line-height:22.6px;font-size:17.4px;color:#3d8fe6;">18.<span class="c" style="font-size:20.2px">运动拖尾</span></div>
<div style="left:777.0px;top:90.6px;width:13.5px;height:1.8px;background:#b0b0b0;"></div>
<div style="left:777.0px;top:95.6px;width:13.5px;height:1.8px;background:#b0b0b0;"></div>
<div style="left:777.0px;top:100.6px;width:13.5px;height:1.8px;background:#b0b0b0;"></div>
<div style="left:540.5px;top:122.5px;width:154.5px;height:25.0px;background:#1a1a1a;border-radius:4px;border:1px solid #2d2d2d;"></div>
<div class="t ls" style="left:553.5px;top:126.4px;height:22.4px;line-height:22.4px;font-size:17.2px;color:#3d8fe6;">18.<span class="c" style="font-size:19.6px">运动拖尾</span></div>
<div style="left:511.0px;top:156.0px;width:1814.5px;height:1.5px;background:#151515;"></div>
<div style="left:511.0px;top:157.5px;width:1814.5px;height:24.5px;background:#000000;"></div>
<div style="left:511.0px;top:182.0px;width:22.5px;height:748.0px;background:#000000;"></div>
<svg style="left:533.0px;top:157.5px;" width="1792" height="24.5" viewBox="0 0 1792 24.5"><path d="M4.98 1 V23 M12.79 16.5 V23 M20.60 16.5 V23 M28.41 16.5 V23 M36.23 16.5 V23 M44.04 16.5 V23 M51.85 16.5 V23 M59.66 16.5 V23 M67.48 16.5 V23 M75.29 16.5 V23 M83.10 1 V23 M90.91 16.5 V23 M98.73 16.5 V23 M106.54 16.5 V23 M114.35 16.5 V23 M122.16 16.5 V23 M129.98 16.5 V23 M137.79 16.5 V23 M145.60 16.5 V23 M153.41 16.5 V23 M161.23 1 V23 M169.04 16.5 V23 M176.85 16.5 V23 M184.66 16.5 V23 M192.48 16.5 V23 M200.29 16.5 V23 M208.10 16.5 V23 M215.91 16.5 V23 M223.73 16.5 V23 M231.54 16.5 V23 M239.35 1 V23 M247.16 16.5 V23 M254.98 16.5 V23 M262.79 16.5 V23 M270.60 16.5 V23 M278.41 16.5 V23 M286.23 16.5 V23 M294.04 16.5 V23 M301.85 16.5 V23 M309.66 16.5 V23 M317.48 1 V23 M325.29 16.5 V23 M333.10 16.5 V23 M340.91 16.5 V23 M348.73 16.5 V23 M356.54 16.5 V23 M364.35 16.5 V23 M372.16 16.5 V23 M379.98 16.5 V23 M387.79 16.5 V23 M395.60 1 V23 M403.41 16.5 V23 M411.23 16.5 V23 M419.04 16.5 V23 M426.85 16.5 V23 M434.66 16.5 V23 M442.48 16.5 V23 M450.29 16.5 V23 M458.10 16.5 V23 M465.91 16.5 V23 M473.73 1 V23 M481.54 16.5 V23 M489.35 16.5 V23 M497.16 16.5 V23 M504.97 16.5 V23 M512.79 16.5 V23 M520.60 16.5 V23 M528.41 16.5 V23 M536.22 16.5 V23 M544.04 16.5 V23 M551.85 1 V23 M559.66 16.5 V23 M567.47 16.5 V23 M575.29 16.5 V23 M583.10 16.5 V23 M590.91 16.5 V23 M598.72 16.5 V23 M606.54 16.5 V23 M614.35 16.5 V23 M622.16 16.5 V23 M629.97 1 V23 M637.79 16.5 V23 M645.60 16.5 V23 M653.41 16.5 V23 M661.22 16.5 V23 M669.04 16.5 V23 M676.85 16.5 V23 M684.66 16.5 V23 M692.47 16.5 V23 M700.29 16.5 V23 M708.10 1 V23 M715.91 16.5 V23 M723.72 16.5 V23 M731.54 16.5 V23 M739.35 16.5 V23 M747.16 16.5 V23 M754.97 16.5 V23 M762.79 16.5 V23 M770.60 16.5 V23 M778.41 16.5 V23 M786.22 1 V23 M794.04 16.5 V23 M801.85 16.5 V23 M809.66 16.5 V23 M817.47 16.5 V23 M825.29 16.5 V23 M833.10 16.5 V23 M840.91 16.5 V23 M848.72 16.5 V23 M856.54 16.5 V23 M864.35 1 V23 M872.16 16.5 V23 M879.97 16.5 V23 M887.79 16.5 V23 M895.60 16.5 V23 M903.41 16.5 V23 M911.22 16.5 V23 M919.04 16.5 V23 M926.85 16.5 V23 M934.66 16.5 V23 M942.47 1 V23 M950.29 16.5 V23 M958.10 16.5 V23 M965.91 16.5 V23 M973.72 16.5 V23 M981.54 16.5 V23 M989.35 16.5 V23 M997.16 16.5 V23 M1004.97 16.5 V23 M1012.79 16.5 V23 M1020.60 1 V23 M1028.41 16.5 V23 M1036.22 16.5 V23 M1044.04 16.5 V23 M1051.85 16.5 V23 M1059.66 16.5 V23 M1067.47 16.5 V23 M1075.29 16.5 V23 M1083.10 16.5 V23 M1090.91 16.5 V23 M1098.72 1 V23 M1106.54 16.5 V23 M1114.35 16.5 V23 M1122.16 16.5 V23 M1129.97 16.5 V23 M1137.79 16.5 V23 M1145.60 16.5 V23 M1153.41 16.5 V23 M1161.22 16.5 V23 M1169.04 16.5 V23 M1176.85 1 V23 M1184.66 16.5 V23 M1192.47 16.5 V23 M1200.29 16.5 V23 M1208.10 16.5 V23 M1215.91 16.5 V23 M1223.72 16.5 V23 M1231.54 16.5 V23 M1239.35 16.5 V23 M1247.16 16.5 V23 M1254.97 1 V23 M1262.79 16.5 V23 M1270.60 16.5 V23 M1278.41 16.5 V23 M1286.22 16.5 V23 M1294.04 16.5 V23 M1301.85 16.5 V23 M1309.66 16.5 V23 M1317.47 16.5 V23 M1325.29 16.5 V23 M1333.10 1 V23 M1340.91 16.5 V23 M1348.72 16.5 V23 M1356.54 16.5 V23 M1364.35 16.5 V23 M1372.16 16.5 V23 M1379.97 16.5 V23 M1387.79 16.5 V23 M1395.60 16.5 V23 M1403.41 16.5 V23 M1411.22 1 V23 M1419.04 16.5 V23 M1426.85 16.5 V23 M1434.66 16.5 V23 M1442.47 16.5 V23 M1450.29 16.5 V23 M1458.10 16.5 V23 M1465.91 16.5 V23 M1473.72 16.5 V23 M1481.54 16.5 V23 M1489.35 1 V23 M1497.16 16.5 V23 M1504.97 16.5 V23 M1512.79 16.5 V23 M1520.60 16.5 V23 M1528.41 16.5 V23 M1536.22 16.5 V23 M1544.04 16.5 V23 M1551.85 16.5 V23 M1559.66 16.5 V23 M1567.47 1 V23 M1575.29 16.5 V23 M1583.10 16.5 V23 M1590.91 16.5 V23 M1598.72 16.5 V23 M1606.54 16.5 V23 M1614.35 16.5 V23 M1622.16 16.5 V23 M1629.97 16.5 V23 M1637.79 16.5 V23 M1645.60 1 V23 M1653.41 16.5 V23 M1661.22 16.5 V23 M1669.04 16.5 V23 M1676.85 16.5 V23 M1684.66 16.5 V23 M1692.47 16.5 V23 M1700.29 16.5 V23 M1708.10 16.5 V23 M1715.91 16.5 V23 M1723.72 1 V23 M1731.54 16.5 V23 M1739.35 16.5 V23 M1747.16 16.5 V23 M1754.97 16.5 V23 M1762.79 16.5 V23 M1770.60 16.5 V23 M1778.41 16.5 V23 M1786.22 16.5 V23" stroke="#e6e6e6" stroke-width="1.5" fill="none"/></svg>
<div class="t ls" style="left:540.5px;top:154.3px;height:16px;line-height:16px;font-size:14.2px;color:#e0e0e0;letter-spacing:-0.6px;">500</div>
<div class="t ls" style="left:618.6px;top:154.3px;height:16px;line-height:16px;font-size:14.2px;color:#e0e0e0;letter-spacing:-0.6px;">400</div>
<div class="t ls" style="left:696.7px;top:154.3px;height:16px;line-height:16px;font-size:14.2px;color:#e0e0e0;letter-spacing:-0.6px;">300</div>
<div class="t ls" style="left:774.9px;top:154.3px;height:16px;line-height:16px;font-size:14.2px;color:#e0e0e0;letter-spacing:-0.6px;">200</div>
<div class="t ls" style="left:853.0px;top:154.3px;height:16px;line-height:16px;font-size:14.2px;color:#e0e0e0;letter-spacing:-0.6px;">100</div>
<div class="t ls" style="left:931.1px;top:154.3px;height:16px;line-height:16px;font-size:14.2px;color:#e0e0e0;letter-spacing:-0.6px;">0</div>
<div class="t ls" style="left:1009.2px;top:154.3px;height:16px;line-height:16px;font-size:14.2px;color:#e0e0e0;letter-spacing:-0.6px;">100</div>
<div class="t ls" style="left:1087.3px;top:154.3px;height:16px;line-height:16px;font-size:14.2px;color:#e0e0e0;letter-spacing:-0.6px;">200</div>
<div class="t ls" style="left:1165.5px;top:154.3px;height:16px;line-height:16px;font-size:14.2px;color:#e0e0e0;letter-spacing:-0.6px;">300</div>
<div class="t ls" style="left:1243.6px;top:154.3px;height:16px;line-height:16px;font-size:14.2px;color:#e0e0e0;letter-spacing:-0.6px;">400</div>
<div class="t ls" style="left:1321.7px;top:154.3px;height:16px;line-height:16px;font-size:14.2px;color:#e0e0e0;letter-spacing:-0.6px;">500</div>
<div class="t ls" style="left:1399.8px;top:154.3px;height:16px;line-height:16px;font-size:14.2px;color:#e0e0e0;letter-spacing:-0.6px;">600</div>
<div class="t ls" style="left:1478.0px;top:154.3px;height:16px;line-height:16px;font-size:14.2px;color:#e0e0e0;letter-spacing:-0.6px;">700</div>
<div class="t ls" style="left:1556.1px;top:154.3px;height:16px;line-height:16px;font-size:14.2px;color:#e0e0e0;letter-spacing:-0.6px;">800</div>
<div class="t ls" style="left:1634.2px;top:154.3px;height:16px;line-height:16px;font-size:14.2px;color:#e0e0e0;letter-spacing:-0.6px;">900</div>
<div class="t ls" style="left:1712.3px;top:154.3px;height:16px;line-height:16px;font-size:14.2px;color:#e0e0e0;letter-spacing:-0.6px;">1000</div>
<div class="t ls" style="left:1790.5px;top:154.3px;height:16px;line-height:16px;font-size:14.2px;color:#e0e0e0;letter-spacing:-0.6px;">1100</div>
<div class="t ls" style="left:1868.6px;top:154.3px;height:16px;line-height:16px;font-size:14.2px;color:#e0e0e0;letter-spacing:-0.6px;">1200</div>
<div class="t ls" style="left:1946.7px;top:154.3px;height:16px;line-height:16px;font-size:14.2px;color:#e0e0e0;letter-spacing:-0.6px;">1300</div>
<div class="t ls" style="left:2024.8px;top:154.3px;height:16px;line-height:16px;font-size:14.2px;color:#e0e0e0;letter-spacing:-0.6px;">1400</div>
<div class="t ls" style="left:2103.0px;top:154.3px;height:16px;line-height:16px;font-size:14.2px;color:#e0e0e0;letter-spacing:-0.6px;">1500</div>
<div class="t ls" style="left:2181.1px;top:154.3px;height:16px;line-height:16px;font-size:14.2px;color:#e0e0e0;letter-spacing:-0.6px;">1600</div>
<div class="t ls" style="left:2259.2px;top:154.3px;height:16px;line-height:16px;font-size:14.2px;color:#e0e0e0;letter-spacing:-0.6px;">1700</div>
<svg style="left:511.0px;top:182.0px;" width="22.5" height="748" viewBox="0 0 22.5 748"><path d="M15.5 6.02 H22 M15.5 13.84 H22 M15.5 21.65 H22 M15.5 29.46 H22 M1 37.27 H22 M15.5 45.09 H22 M15.5 52.90 H22 M15.5 60.71 H22 M15.5 68.52 H22 M15.5 76.34 H22 M15.5 84.15 H22 M15.5 91.96 H22 M15.5 99.77 H22 M15.5 107.59 H22 M1 115.40 H22 M15.5 123.21 H22 M15.5 131.02 H22 M15.5 138.84 H22 M15.5 146.65 H22 M15.5 154.46 H22 M15.5 162.27 H22 M15.5 170.09 H22 M15.5 177.90 H22 M15.5 185.71 H22 M1 193.52 H22 M15.5 201.34 H22 M15.5 209.15 H22 M15.5 216.96 H22 M15.5 224.77 H22 M15.5 232.59 H22 M15.5 240.40 H22 M15.5 248.21 H22 M15.5 256.02 H22 M15.5 263.84 H22 M1 271.65 H22 M15.5 279.46 H22 M15.5 287.27 H22 M15.5 295.09 H22 M15.5 302.90 H22 M15.5 310.71 H22 M15.5 318.52 H22 M15.5 326.34 H22 M15.5 334.15 H22 M15.5 341.96 H22 M1 349.77 H22 M15.5 357.59 H22 M15.5 365.40 H22 M15.5 373.21 H22 M15.5 381.02 H22 M15.5 388.84 H22 M15.5 396.65 H22 M15.5 404.46 H22 M15.5 412.27 H22 M15.5 420.09 H22 M1 427.90 H22 M15.5 435.71 H22 M15.5 443.52 H22 M15.5 451.34 H22 M15.5 459.15 H22 M15.5 466.96 H22 M15.5 474.77 H22 M15.5 482.59 H22 M15.5 490.40 H22 M15.5 498.21 H22 M1 506.02 H22 M15.5 513.84 H22 M15.5 521.65 H22 M15.5 529.46 H22 M15.5 537.27 H22 M15.5 545.09 H22 M15.5 552.90 H22 M15.5 560.71 H22 M15.5 568.52 H22 M15.5 576.34 H22 M1 584.15 H22 M15.5 591.96 H22 M15.5 599.77 H22 M15.5 607.59 H22 M15.5 615.40 H22 M15.5 623.21 H22 M15.5 631.02 H22 M15.5 638.84 H22 M15.5 646.65 H22 M15.5 654.46 H22 M1 662.27 H22 M15.5 670.09 H22 M15.5 677.90 H22 M15.5 685.71 H22 M15.5 693.52 H22 M15.5 701.34 H22 M15.5 709.15 H22 M15.5 716.96 H22 M15.5 724.77 H22 M15.5 732.59 H22 M1 740.40 H22" stroke="#e6e6e6" stroke-width="1.5" fill="none"/></svg>
<div style="left:511px;top:182px;width:21px;height:747.5px;overflow:hidden;">
<div class="t ls" style="left:-0.5px;top:39.8px;width:10px;font-size:10.6px;line-height:10px;color:#e0e0e0;letter-spacing:4.4px;writing-mode:vertical-rl;text-orientation:sideways;">100</div>
<div class="t ls" style="left:-0.5px;top:117.9px;width:10px;font-size:10.6px;line-height:10px;color:#e0e0e0;letter-spacing:4.4px;writing-mode:vertical-rl;text-orientation:sideways;">0</div>
<div class="t ls" style="left:-0.5px;top:196.0px;width:10px;font-size:10.6px;line-height:10px;color:#e0e0e0;letter-spacing:4.4px;writing-mode:vertical-rl;text-orientation:sideways;">100</div>
<div class="t ls" style="left:-0.5px;top:274.1px;width:10px;font-size:10.6px;line-height:10px;color:#e0e0e0;letter-spacing:4.4px;writing-mode:vertical-rl;text-orientation:sideways;">200</div>
<div class="t ls" style="left:-0.5px;top:352.3px;width:10px;font-size:10.6px;line-height:10px;color:#e0e0e0;letter-spacing:4.4px;writing-mode:vertical-rl;text-orientation:sideways;">300</div>
<div class="t ls" style="left:-0.5px;top:430.4px;width:10px;font-size:10.6px;line-height:10px;color:#e0e0e0;letter-spacing:4.4px;writing-mode:vertical-rl;text-orientation:sideways;">400</div>
<div class="t ls" style="left:-0.5px;top:508.5px;width:10px;font-size:10.6px;line-height:10px;color:#e0e0e0;letter-spacing:4.4px;writing-mode:vertical-rl;text-orientation:sideways;">500</div>
<div class="t ls" style="left:-0.5px;top:586.6px;width:10px;font-size:10.6px;line-height:10px;color:#e0e0e0;letter-spacing:4.4px;writing-mode:vertical-rl;text-orientation:sideways;">600</div>
<div class="t ls" style="left:-0.5px;top:664.8px;width:10px;font-size:10.6px;line-height:10px;color:#e0e0e0;letter-spacing:4.4px;writing-mode:vertical-rl;text-orientation:sideways;">700</div>
<div class="t ls" style="left:-0.5px;top:742.9px;width:10px;font-size:10.6px;line-height:10px;color:#e0e0e0;letter-spacing:4.4px;writing-mode:vertical-rl;text-orientation:sideways;">800</div>
</div>
<div style="left:511.0px;top:180.2px;width:1814.5px;height:1.7px;background:#e4e4e4;"></div>
<div style="left:511.0px;top:180.0px;width:23.0px;height:2.6px;background:#ffffff;"></div>
<div style="left:532.2px;top:182.0px;width:1.6px;height:748.0px;background:#d4d4d4;"></div>
<div style="left:531.6px;top:157.5px;width:2.6px;height:24.5px;background:#ffffff;"></div>
<div style="left:511.0px;top:169.0px;width:21.0px;height:1.3px;background:#d0d0d0;"></div>
<div style="left:521.0px;top:158.0px;width:1.3px;height:23.0px;background:#d0d0d0;"></div>
<div style="left:2124.5px;top:157.5px;width:1.8px;height:24.5px;background:#3d8fe6;"></div>
<div style="left:511.0px;top:736.5px;width:22.0px;height:1.8px;background:#3d8fe6;"></div>
<div style="left:928.5px;top:297.2px;width:1000.0px;height:515.6px;background:#000000;"></div>
<div style="left:1320.4px;top:539.6px;width:89.7px;height:89.7px;background:#f0c431;opacity:0.134;"></div>
<div style="left:1341.1px;top:529.6px;width:89.7px;height:89.7px;background:#f0c431;opacity:0.168;"></div>
<div style="left:1361.8px;top:519.6px;width:89.7px;height:89.7px;background:#f0c431;opacity:0.210;"></div>
<div style="left:1382.5px;top:509.6px;width:89.7px;height:89.7px;background:#f0c431;opacity:0.262;"></div>
<div style="left:1403.2px;top:499.6px;width:89.7px;height:89.7px;background:#f0c431;opacity:0.328;"></div>
<div style="left:1423.9px;top:489.6px;width:89.7px;height:89.7px;background:#f0c431;opacity:0.410;"></div>
<div style="left:1444.6px;top:479.6px;width:89.7px;height:89.7px;background:#f0c431;opacity:0.512;"></div>
<div style="left:1465.3px;top:469.6px;width:89.7px;height:89.7px;background:#f0c431;opacity:0.640;"></div>
<div style="left:1486.0px;top:459.6px;width:89.7px;height:89.7px;background:#f0c431;opacity:0.800;"></div>
<div style="left:1506.7px;top:449.6px;width:89.7px;height:89.7px;background:#f0c431;opacity:1.000;"></div>
<div style="left:511.0px;top:929.5px;width:1814.5px;height:1.8px;background:#161616;"></div>
<svg style="left:517.0px;top:938.0px;" width="23" height="19" viewBox="0 0 23 19"><rect x="0.5" y="0.5" width="15" height="11" fill="#b4b4b4"/><path d="M5.5 3 L10.5 6 L5.5 9 Z" fill="#232323"/><path d="M19 4 L19 14.5 L4 14.5 M22 7 L22 17.5 L7 17.5" fill="none" stroke="#b4b4b4" stroke-width="1.8"/></svg>
<svg style="left:551.0px;top:938.0px;" width="21" height="19" viewBox="0 0 21 19"><rect x="1" y="1" width="19" height="12.5" fill="none" stroke="#b4b4b4" stroke-width="2"/><path d="M4 17.5 L17 17.5 M10.5 14 L10.5 17" stroke="#b4b4b4" stroke-width="2"/></svg>
<svg style="left:584.0px;top:937.0px;" width="26" height="24" viewBox="0 0 26 24"><path d="M1 4 C1 1 4 1 6.5 1 L19.5 1 C22 1 25 1 25 4 L25 10 C25 14 21 15 18.5 14 L14.5 10.5 L11.5 10.5 L7.5 14 C5 15 1 14 1 10 Z" fill="#b4b4b4"/><circle cx="7.3" cy="7" r="3" fill="#232323"/><circle cx="18.7" cy="7" r="3" fill="#232323"/><path d="M15 18 L24 18 L19.5 23 Z" fill="#b4b4b4"/></svg>
<div style="left:615.0px;top:934.0px;width:106.0px;height:27.0px;background:#242424;border-radius:4px;border:1px solid #2e2e2e;"></div>
<div class="t ls" style="left:624.0px;top:936.3px;height:23.4px;line-height:23.4px;font-size:18px;color:#a8a8a8;">50%</div>
<svg style="left:702.0px;top:943.5px;" width="12" height="8" viewBox="0 0 12 8"><path d="M1 1 L6.0 6.5 L11 1" fill="none" stroke="#9a9a9a" stroke-width="1.8"/></svg>
<svg style="left:728.0px;top:936.0px;" width="24" height="25" viewBox="0 0 24 25"><rect x="3" y="4" width="17" height="13.5" fill="none" stroke="#b4b4b4" stroke-width="1.8"/><path d="M11.5 0 L11.5 8 M11.5 13.5 L11.5 21 M0 10.7 L7 10.7 M16 10.7 L23 10.7" stroke="#b4b4b4" stroke-width="1.6"/><path d="M15 20 L24 20 L19.5 24.5 Z" fill="#b4b4b4"/></svg>
<div style="left:759.0px;top:933.5px;width:31.5px;height:28.0px;background:#181818;border-radius:3px;"></div>
<svg style="left:763.0px;top:938.0px;" width="24" height="20" viewBox="0 0 24 20"><path d="M2.5 17.5 L6 7 L18.5 2.5 L21.5 17.5 Z" fill="none" stroke="#3d8fe6" stroke-width="1.8"/><rect x="0.5" y="15.5" width="4" height="4" fill="#3d8fe6"/><rect x="4" y="5" width="4" height="4" fill="#3d8fe6"/><rect x="16.5" y="0.5" width="4" height="4" fill="#3d8fe6"/><rect x="19.5" y="15.5" width="4" height="4" fill="#3d8fe6"/></svg>
<div style="left:794.0px;top:934.0px;width:105.0px;height:27.0px;background:#242424;border-radius:4px;border:1px solid #2e2e2e;"></div>
<div class="t ls" style="left:806.0px;top:936.8px;height:22.4px;line-height:22.4px;font-size:17.2px;color:#9a9a9a;">0:00:02:15</div>
<svg style="left:907.0px;top:937.0px;" width="24" height="20" viewBox="0 0 24 20"><path d="M1 4.5 L7 4.5 L9 1.5 L15 1.5 L17 4.5 L23 4.5 L23 19 L1 19 Z" fill="#b4b4b4"/><circle cx="12" cy="11.5" r="4.8" fill="#232323"/><circle cx="12" cy="11.5" r="2.8" fill="#b4b4b4"/></svg>
<svg style="left:941.0px;top:936.0px;" width="24" height="20" viewBox="0 0 24 20"><path d="M1 8 L6 8 L7.5 5.5 L12.5 5.5 L14 8 L19 8 L19 19 L1 19 Z" fill="#3c3c3c"/><circle cx="10" cy="13.5" r="3.4" fill="#232323"/><path d="M10 4 C14 0 21 1 22 7" fill="none" stroke="#3c3c3c" stroke-width="2"/></svg>
<svg style="left:976.0px;top:935.0px;" width="24" height="26" viewBox="0 0 24 26"><circle cx="12" cy="6.5" r="5.5" fill="#e02828"/><circle cx="7.5" cy="14" r="5.5" fill="#28b038"/><circle cx="16.5" cy="14" r="5.5" fill="#3a6ae0"/><path d="M15 21 L24 21 L19.5 25.5 Z" fill="#b4b4b4"/></svg>
<div style="left:1006.0px;top:934.0px;width:133.0px;height:27.0px;background:#242424;border-radius:4px;border:1px solid #2e2e2e;"></div>
<div class="t ls" style="left:1017.0px;top:936.8px;height:26.0px;line-height:26.0px;font-size:20px;color:#a8a8a8;letter-spacing:1px;">完整</div>
<svg style="left:1119.0px;top:943.5px;" width="12" height="8" viewBox="0 0 12 8"><path d="M1 1 L6.0 6.5 L11 1" fill="none" stroke="#9a9a9a" stroke-width="1.8"/></svg>
<svg style="left:1147.0px;top:937.0px;" width="23" height="20" viewBox="0 0 23 20"><rect x="1" y="1" width="21" height="18" fill="none" stroke="#b4b4b4" stroke-width="2"/><rect x="6" y="6" width="11" height="8" fill="#b4b4b4"/></svg>
<svg style="left:1181.0px;top:937.0px;" width="23" height="20" viewBox="0 0 23 20"><rect x="1" y="1" width="21" height="18" fill="#555" stroke="#b4b4b4" stroke-width="2"/><path d="M2 2 h6.3 v5.3 h-6.3 Z M14.6 2 h6.4 v5.3 h-6.4 Z M8.3 7.3 h6.3 v5.3 h-6.3 Z M2 12.6 h6.3 v5.4 h-6.3 Z M14.6 12.6 h6.4 v5.4 h-6.4 Z" fill="#b4b4b4"/></svg>
<div style="left:1212.0px;top:934.0px;width:162.0px;height:27.0px;background:#242424;border-radius:4px;border:1px solid #2e2e2e;"></div>
<div class="t ls" style="left:1223.0px;top:936.8px;height:26.0px;line-height:26.0px;font-size:20px;color:#a8a8a8;letter-spacing:0.4px;">活动摄像机</div>
<svg style="left:1355.0px;top:943.5px;" width="12" height="8" viewBox="0 0 12 8"><path d="M1 1 L6.0 6.5 L11 1" fill="none" stroke="#9a9a9a" stroke-width="1.8"/></svg>
<div style="left:1380.0px;top:934.0px;width:106.0px;height:27.0px;background:#242424;border-radius:4px;border:1px solid #2e2e2e;"></div>
<div class="t lf" style="left:1390.5px;top:938.0px;height:24.7px;line-height:24.7px;font-size:19px;color:#a8a8a8;">1 <span class="c" style="font-size:20px;font-family:'Liberation Sans','Noto Sans CJK SC',sans-serif">个</span>...</div>
<svg style="left:1467.0px;top:943.5px;" width="12" height="8" viewBox="0 0 12 8"><path d="M1 1 L6.0 6.5 L11 1" fill="none" stroke="#9a9a9a" stroke-width="1.8"/></svg>
<svg style="left:1493.0px;top:937.0px;" width="24" height="20" viewBox="0 0 24 20"><path d="M1 4 L23 4 M3.5 1.2 L0.8 4 L3.5 6.8 M20.5 1.2 L23.2 4 L20.5 6.8" fill="none" stroke="#b4b4b4" stroke-width="1.8"/><rect x="5.5" y="9" width="13" height="9.5" fill="none" stroke="#b4b4b4" stroke-width="2"/></svg>
<div style="left:1522.5px;top:933.5px;width:32.5px;height:28.0px;background:#1b1b1b;border-radius:3px;"></div>
<svg style="left:1528.0px;top:937.0px;" width="24" height="21" viewBox="0 0 24 21"><rect x="1" y="1" width="19" height="16" fill="none" stroke="#b4b4b4" stroke-width="2"/><path d="M12 3 L6.5 10 L10 10 L8.5 15 L14.5 8 L11 8 Z" fill="#b4b4b4"/><path d="M15 16 L24 16 L19.5 20.5 Z" fill="#b4b4b4"/></svg>
<svg style="left:1564.0px;top:937.0px;" width="22" height="20" viewBox="0 0 22 20"><path d="M1 5 L1 18 L21 18 L21 5" fill="none" stroke="#b4b4b4" stroke-width="2"/><rect x="8" y="1" width="6" height="8" fill="#b4b4b4"/><rect x="4.5" y="10" width="4" height="6" fill="#b4b4b4"/><rect x="13.5" y="10" width="4" height="6" fill="#b4b4b4"/></svg>
<svg style="left:1596.0px;top:937.0px;" width="22" height="20" viewBox="0 0 22 20"><rect x="7.5" y="0.5" width="7" height="6" fill="#b4b4b4"/><rect x="0" y="12.5" width="7" height="6.5" fill="#b4b4b4"/><rect x="15" y="12.5" width="7" height="6.5" fill="#b4b4b4"/><path d="M11 6 L11 9.5 M3.5 12.5 L3.5 9.5 L18.5 9.5 L18.5 12.5" fill="none" stroke="#b4b4b4" stroke-width="1.8"/></svg>
<div style="left:1626.0px;top:934.0px;width:1.8px;height:27.0px;background:#1b1b1b;"></div>
<svg style="left:1636.0px;top:937.0px;" width="21" height="21" viewBox="0 0 21 21"><circle cx="10.5" cy="10.5" r="9.5" fill="#b4b4b4"/><path d="M10.5 1 L13.5 10 M20 10.5 L11 13 M10.5 20 L7.5 11 M1 10.5 L10 8 M17.3 3.8 L10.5 10.5 M3.7 17.2 L10.5 10.5" stroke="#232323" stroke-width="1.6"/><circle cx="10.5" cy="10.5" r="3" fill="#232323"/></svg>
<div class="t ls" style="left:1666.0px;top:936.0px;height:24.1px;line-height:24.1px;font-size:18.5px;color:#3d8fe6;">+0.0</div>
<div style="left:2333.0px;top:76.0px;width:322.5px;height:891.0px;background:#232323;"></div>
<div class="t ls" style="left:2353.0px;top:82.9px;height:26.8px;line-height:26.8px;font-size:20.6px;color:#b6b6b6;letter-spacing:1px;">效果和预设</div>
<div style="left:2473.0px;top:90.6px;width:13.5px;height:1.8px;background:#b0b0b0;"></div>
<div style="left:2473.0px;top:95.6px;width:13.5px;height:1.8px;background:#b0b0b0;"></div>
<div style="left:2473.0px;top:100.6px;width:13.5px;height:1.8px;background:#b0b0b0;"></div>
<div style="left:2342.5px;top:122.5px;width:302.5px;height:28.0px;background:#161616;border-radius:5px;border:1px solid #2c2c2c;"></div>
<svg style="left:2351.5px;top:126.5px;" width="30" height="20" viewBox="0 0 30 20"><circle cx="12" cy="7.5" r="5.6" fill="none" stroke="#b4b4b4" stroke-width="1.8"/><path d="M8 11.5 L2 18" stroke="#b4b4b4" stroke-width="2.6" stroke-linecap="round"/><path d="M19 13 L28 13 L23.5 17 Z" fill="#b4b4b4"/></svg>
<div style="left:2333.0px;top:155.0px;width:322.5px;height:2.0px;background:#161616;"></div>
<div style="left:2333px;top:157px;width:294px;height:781.5px;overflow:hidden;">
<div style="left:0.0px;top:-0.5px;width:294.0px;height:26.6px;background:#262626;"></div>
<div style="left:0.0px;top:24.9px;width:294.0px;height:1.2px;background:#1e1e1e;"></div>
<svg style="left:9.0px;top:5.8px;" width="8" height="14" viewBox="0 0 8 14"><path d="M1.5 1.5 L6.5 7 L1.5 12.5" fill="none" stroke="#b4b4b4" stroke-width="1.8"/></svg>
<div class="t lm" style="left:24.5px;top:3.6px;height:19.6px;line-height:19.6px;font-size:15.1px;color:#a6a6a6;">* <span class="c" style="font-size:17.6px">动画预设</span></div>
<div style="left:0.0px;top:26.1px;width:294.0px;height:26.6px;background:#242424;"></div>
<div style="left:0.0px;top:51.4px;width:294.0px;height:1.2px;background:#1e1e1e;"></div>
<svg style="left:9.0px;top:32.4px;" width="8" height="14" viewBox="0 0 8 14"><path d="M1.5 1.5 L6.5 7 L1.5 12.5" fill="none" stroke="#b4b4b4" stroke-width="1.8"/></svg>
<div class="t lm" style="left:24.5px;top:30.2px;height:19.6px;line-height:19.6px;font-size:15.1px;color:#a6a6a6;">3D <span class="c" style="font-size:17.6px">声道</span></div>
<div style="left:0.0px;top:52.6px;width:294.0px;height:26.6px;background:#262626;"></div>
<div style="left:0.0px;top:78.0px;width:294.0px;height:1.2px;background:#1e1e1e;"></div>
<svg style="left:9.0px;top:58.9px;" width="8" height="14" viewBox="0 0 8 14"><path d="M1.5 1.5 L6.5 7 L1.5 12.5" fill="none" stroke="#b4b4b4" stroke-width="1.8"/></svg>
<div class="t lm" style="left:24.5px;top:56.7px;height:19.6px;line-height:19.6px;font-size:15.1px;color:#a6a6a6;">AESweets</div>
<div style="left:0.0px;top:79.2px;width:294.0px;height:26.6px;background:#242424;"></div>
<div style="left:0.0px;top:104.6px;width:294.0px;height:1.2px;background:#1e1e1e;"></div>
<svg style="left:9.0px;top:85.5px;" width="8" height="14" viewBox="0 0 8 14"><path d="M1.5 1.5 L6.5 7 L1.5 12.5" fill="none" stroke="#b4b4b4" stroke-width="1.8"/></svg>
<div class="t lm" style="left:24.5px;top:83.3px;height:19.6px;line-height:19.6px;font-size:15.1px;color:#a6a6a6;">AE<span class="c" style="font-size:17.6px">流体</span></div>
<div style="left:0.0px;top:105.8px;width:294.0px;height:26.6px;background:#262626;"></div>
<div style="left:0.0px;top:131.1px;width:294.0px;height:1.2px;background:#1e1e1e;"></div>
<svg style="left:9.0px;top:112.1px;" width="8" height="14" viewBox="0 0 8 14"><path d="M1.5 1.5 L6.5 7 L1.5 12.5" fill="none" stroke="#b4b4b4" stroke-width="1.8"/></svg>
<div class="t lm" style="left:24.5px;top:109.9px;height:19.6px;line-height:19.6px;font-size:15.1px;color:#a6a6a6;">AtomKraft</div>
<div style="left:0.0px;top:132.3px;width:294.0px;height:26.6px;background:#242424;"></div>
<div style="left:0.0px;top:157.7px;width:294.0px;height:1.2px;background:#1e1e1e;"></div>
<svg style="left:9.0px;top:138.6px;" width="8" height="14" viewBox="0 0 8 14"><path d="M1.5 1.5 L6.5 7 L1.5 12.5" fill="none" stroke="#b4b4b4" stroke-width="1.8"/></svg>
<div class="t lm" style="left:24.5px;top:136.4px;height:19.6px;line-height:19.6px;font-size:15.1px;color:#a6a6a6;">BAO</div>
<div style="left:0.0px;top:158.9px;width:294.0px;height:26.6px;background:#262626;"></div>
<div style="left:0.0px;top:184.3px;width:294.0px;height:1.2px;background:#1e1e1e;"></div>
<svg style="left:9.0px;top:165.2px;" width="8" height="14" viewBox="0 0 8 14"><path d="M1.5 1.5 L6.5 7 L1.5 12.5" fill="none" stroke="#b4b4b4" stroke-width="1.8"/></svg>
<div class="t lm" style="left:24.5px;top:163.0px;height:19.6px;line-height:19.6px;font-size:15.1px;color:#a6a6a6;">BCC 3D<span class="c" style="font-size:17.6px">物体</span></div>
<div style="left:0.0px;top:185.5px;width:294.0px;height:26.6px;background:#242424;"></div>
<div style="left:0.0px;top:210.8px;width:294.0px;height:1.2px;background:#1e1e1e;"></div>
<svg style="left:9.0px;top:191.7px;" width="8" height="14" viewBox="0 0 8 14"><path d="M1.5 1.5 L6.5 7 L1.5 12.5" fill="none" stroke="#b4b4b4" stroke-width="1.8"/></svg>
<div class="t lm" style="left:24.5px;top:189.5px;height:19.6px;line-height:19.6px;font-size:15.1px;color:#a6a6a6;">BCC VR</div>
<div style="left:0.0px;top:212.0px;width:294.0px;height:26.6px;background:#262626;"></div>
<div style="left:0.0px;top:237.4px;width:294.0px;height:1.2px;background:#1e1e1e;"></div>
<svg style="left:9.0px;top:218.3px;" width="8" height="14" viewBox="0 0 8 14"><path d="M1.5 1.5 L6.5 7 L1.5 12.5" fill="none" stroke="#b4b4b4" stroke-width="1.8"/></svg>
<div class="t lm" style="left:24.5px;top:216.1px;height:19.6px;line-height:19.6px;font-size:15.1px;color:#a6a6a6;">BCC <span class="c" style="font-size:17.6px">三维空间</span></div>
<div style="left:0.0px;top:238.6px;width:294.0px;height:26.6px;background:#242424;"></div>
<div style="left:0.0px;top:263.9px;width:294.0px;height:1.2px;background:#1e1e1e;"></div>
<svg style="left:9.0px;top:244.9px;" width="8" height="14" viewBox="0 0 8 14"><path d="M1.5 1.5 L6.5 7 L1.5 12.5" fill="none" stroke="#b4b4b4" stroke-width="1.8"/></svg>
<div class="t lm" style="left:24.5px;top:242.7px;height:19.6px;line-height:19.6px;font-size:15.1px;color:#a6a6a6;">BCC <span class="c" style="font-size:17.6px">图像修复</span></div>
<div style="left:0.0px;top:265.1px;width:294.0px;height:26.6px;background:#262626;"></div>
<div style="left:0.0px;top:290.5px;width:294.0px;height:1.2px;background:#1e1e1e;"></div>
<svg style="left:9.0px;top:271.4px;" width="8" height="14" viewBox="0 0 8 14"><path d="M1.5 1.5 L6.5 7 L1.5 12.5" fill="none" stroke="#b4b4b4" stroke-width="1.8"/></svg>
<div class="t lm" style="left:24.5px;top:269.2px;height:19.6px;line-height:19.6px;font-size:15.1px;color:#a6a6a6;">BCC <span class="c" style="font-size:17.6px">弯曲</span></div>
<div style="left:0.0px;top:291.7px;width:294.0px;height:26.6px;background:#242424;"></div>
<div style="left:0.0px;top:317.1px;width:294.0px;height:1.2px;background:#1e1e1e;"></div>
<svg style="left:9.0px;top:298.0px;" width="8" height="14" viewBox="0 0 8 14"><path d="M1.5 1.5 L6.5 7 L1.5 12.5" fill="none" stroke="#b4b4b4" stroke-width="1.8"/></svg>
<div class="t lm" style="left:24.5px;top:295.8px;height:19.6px;line-height:19.6px;font-size:15.1px;color:#a6a6a6;">BCC <span class="c" style="font-size:17.6px">抠像和合成</span></div>
<div style="left:0.0px;top:318.3px;width:294.0px;height:26.6px;background:#262626;"></div>
<div style="left:0.0px;top:343.6px;width:294.0px;height:1.2px;background:#1e1e1e;"></div>
<svg style="left:9.0px;top:324.6px;" width="8" height="14" viewBox="0 0 8 14"><path d="M1.5 1.5 L6.5 7 L1.5 12.5" fill="none" stroke="#b4b4b4" stroke-width="1.8"/></svg>
<div class="t lm" style="left:24.5px;top:322.4px;height:19.6px;line-height:19.6px;font-size:15.1px;color:#a6a6a6;">BCC <span class="c" style="font-size:17.6px">旧版插件</span></div>
<div style="left:0.0px;top:344.8px;width:294.0px;height:26.6px;background:#242424;"></div>
<div style="left:0.0px;top:370.2px;width:294.0px;height:1.2px;background:#1e1e1e;"></div>
<svg style="left:9.0px;top:351.1px;" width="8" height="14" viewBox="0 0 8 14"><path d="M1.5 1.5 L6.5 7 L1.5 12.5" fill="none" stroke="#b4b4b4" stroke-width="1.8"/></svg>
<div class="t lm" style="left:24.5px;top:348.9px;height:19.6px;line-height:19.6px;font-size:15.1px;color:#a6a6a6;">BCC <span class="c" style="font-size:17.6px">时间</span></div>
<div style="left:0.0px;top:371.4px;width:294.0px;height:26.6px;background:#262626;"></div>
<div style="left:0.0px;top:396.8px;width:294.0px;height:1.2px;background:#1e1e1e;"></div>
<svg style="left:9.0px;top:377.7px;" width="8" height="14" viewBox="0 0 8 14"><path d="M1.5 1.5 L6.5 7 L1.5 12.5" fill="none" stroke="#b4b4b4" stroke-width="1.8"/></svg>
<div class="t lm" style="left:24.5px;top:375.5px;height:19.6px;line-height:19.6px;font-size:15.1px;color:#a6a6a6;">BCC <span class="c" style="font-size:17.6px">模糊</span></div>
<div style="left:0.0px;top:398.0px;width:294.0px;height:26.6px;background:#242424;"></div>
<div style="left:0.0px;top:423.3px;width:294.0px;height:1.2px;background:#1e1e1e;"></div>
<svg style="left:9.0px;top:404.2px;" width="8" height="14" viewBox="0 0 8 14"><path d="M1.5 1.5 L6.5 7 L1.5 12.5" fill="none" stroke="#b4b4b4" stroke-width="1.8"/></svg>
<div class="t lm" style="left:24.5px;top:402.0px;height:19.6px;line-height:19.6px;font-size:15.1px;color:#a6a6a6;">BCC <span class="c" style="font-size:17.6px">灯光</span></div>
<div style="left:0.0px;top:424.5px;width:294.0px;height:26.6px;background:#262626;"></div>
<div style="left:0.0px;top:449.9px;width:294.0px;height:1.2px;background:#1e1e1e;"></div>
<svg style="left:9.0px;top:430.8px;" width="8" height="14" viewBox="0 0 8 14"><path d="M1.5 1.5 L6.5 7 L1.5 12.5" fill="none" stroke="#b4b4b4" stroke-width="1.8"/></svg>
<div class="t lm" style="left:24.5px;top:428.6px;height:19.6px;line-height:19.6px;font-size:15.1px;color:#a6a6a6;">BCC <span class="c" style="font-size:17.6px">电影风格</span></div>
<div style="left:0.0px;top:451.1px;width:294.0px;height:26.6px;background:#242424;"></div>
<div style="left:0.0px;top:476.4px;width:294.0px;height:1.2px;background:#1e1e1e;"></div>
<svg style="left:9.0px;top:457.4px;" width="8" height="14" viewBox="0 0 8 14"><path d="M1.5 1.5 L6.5 7 L1.5 12.5" fill="none" stroke="#b4b4b4" stroke-width="1.8"/></svg>
<div class="t lm" style="left:24.5px;top:455.2px;height:19.6px;line-height:19.6px;font-size:15.1px;color:#a6a6a6;">BCC <span class="c" style="font-size:17.6px">简单跟踪</span></div>
<div style="left:0.0px;top:477.6px;width:294.0px;height:26.6px;background:#262626;"></div>
<div style="left:0.0px;top:503.0px;width:294.0px;height:1.2px;background:#1e1e1e;"></div>
<svg style="left:9.0px;top:483.9px;" width="8" height="14" viewBox="0 0 8 14"><path d="M1.5 1.5 L6.5 7 L1.5 12.5" fill="none" stroke="#b4b4b4" stroke-width="1.8"/></svg>
<div class="t lm" style="left:24.5px;top:481.7px;height:19.6px;line-height:19.6px;font-size:15.1px;color:#a6a6a6;">BCC <span class="c" style="font-size:17.6px">粒子特效</span></div>
<div style="left:0.0px;top:504.2px;width:294.0px;height:26.6px;background:#242424;"></div>
<div style="left:0.0px;top:529.6px;width:294.0px;height:1.2px;background:#1e1e1e;"></div>
<svg style="left:9.0px;top:510.5px;" width="8" height="14" viewBox="0 0 8 14"><path d="M1.5 1.5 L6.5 7 L1.5 12.5" fill="none" stroke="#b4b4b4" stroke-width="1.8"/></svg>
<div class="t lm" style="left:24.5px;top:508.3px;height:19.6px;line-height:19.6px;font-size:15.1px;color:#a6a6a6;">BCC <span class="c" style="font-size:17.6px">纹理</span></div>
<div style="left:0.0px;top:530.8px;width:294.0px;height:26.6px;background:#262626;"></div>
<div style="left:0.0px;top:556.1px;width:294.0px;height:1.2px;background:#1e1e1e;"></div>
<svg style="left:9.0px;top:537.0px;" width="8" height="14" viewBox="0 0 8 14"><path d="M1.5 1.5 L6.5 7 L1.5 12.5" fill="none" stroke="#b4b4b4" stroke-width="1.8"/></svg>
<div class="t lm" style="left:24.5px;top:534.9px;height:19.6px;line-height:19.6px;font-size:15.1px;color:#a6a6a6;">BCC <span class="c" style="font-size:17.6px">艺术效果</span></div>
<div style="left:0.0px;top:557.3px;width:294.0px;height:26.6px;background:#242424;"></div>
<div style="left:0.0px;top:582.7px;width:294.0px;height:1.2px;background:#1e1e1e;"></div>
<svg style="left:9.0px;top:563.6px;" width="8" height="14" viewBox="0 0 8 14"><path d="M1.5 1.5 L6.5 7 L1.5 12.5" fill="none" stroke="#b4b4b4" stroke-width="1.8"/></svg>
<div class="t lm" style="left:24.5px;top:561.4px;height:19.6px;line-height:19.6px;font-size:15.1px;color:#a6a6a6;">BCC <span class="c" style="font-size:17.6px">调色工具</span></div>
<div style="left:0.0px;top:583.9px;width:294.0px;height:26.6px;background:#262626;"></div>
<div style="left:0.0px;top:609.3px;width:294.0px;height:1.2px;background:#1e1e1e;"></div>
<svg style="left:9.0px;top:590.2px;" width="8" height="14" viewBox="0 0 8 14"><path d="M1.5 1.5 L6.5 7 L1.5 12.5" fill="none" stroke="#b4b4b4" stroke-width="1.8"/></svg>
<div class="t lm" style="left:24.5px;top:588.0px;height:19.6px;line-height:19.6px;font-size:15.1px;color:#a6a6a6;">BCC <span class="c" style="font-size:17.6px">转场效果</span></div>
<div style="left:0.0px;top:610.5px;width:294.0px;height:26.6px;background:#242424;"></div>
<div style="left:0.0px;top:635.8px;width:294.0px;height:1.2px;background:#1e1e1e;"></div>
<svg style="left:9.0px;top:616.7px;" width="8" height="14" viewBox="0 0 8 14"><path d="M1.5 1.5 L6.5 7 L1.5 12.5" fill="none" stroke="#b4b4b4" stroke-width="1.8"/></svg>
<div class="t lm" style="left:24.5px;top:614.5px;height:19.6px;line-height:19.6px;font-size:15.1px;color:#a6a6a6;">BCC <span class="c" style="font-size:17.6px">预览器</span></div>
<div style="left:0.0px;top:637.0px;width:294.0px;height:26.6px;background:#262626;"></div>
<div style="left:0.0px;top:662.4px;width:294.0px;height:1.2px;background:#1e1e1e;"></div>
<svg style="left:9.0px;top:643.3px;" width="8" height="14" viewBox="0 0 8 14"><path d="M1.5 1.5 L6.5 7 L1.5 12.5" fill="none" stroke="#b4b4b4" stroke-width="1.8"/></svg>
<div class="t lm" style="left:24.5px;top:641.1px;height:19.6px;line-height:19.6px;font-size:15.1px;color:#a6a6a6;">BCC <span class="c" style="font-size:17.6px">风格化</span></div>
<div style="left:0.0px;top:663.6px;width:294.0px;height:26.6px;background:#242424;"></div>
<div style="left:0.0px;top:688.9px;width:294.0px;height:1.2px;background:#1e1e1e;"></div>
<svg style="left:9.0px;top:669.9px;" width="8" height="14" viewBox="0 0 8 14"><path d="M1.5 1.5 L6.5 7 L1.5 12.5" fill="none" stroke="#b4b4b4" stroke-width="1.8"/></svg>
<div class="t lm" style="left:24.5px;top:667.7px;height:19.6px;line-height:19.6px;font-size:15.1px;color:#a6a6a6;">Boris FX Mocha</div>
<div style="left:0.0px;top:690.1px;width:294.0px;height:26.6px;background:#262626;"></div>
<div style="left:0.0px;top:715.5px;width:294.0px;height:1.2px;background:#1e1e1e;"></div>
<svg style="left:9.0px;top:696.4px;" width="8" height="14" viewBox="0 0 8 14"><path d="M1.5 1.5 L6.5 7 L1.5 12.5" fill="none" stroke="#b4b4b4" stroke-width="1.8"/></svg>
<div class="t lm" style="left:24.5px;top:694.2px;height:19.6px;line-height:19.6px;font-size:15.1px;color:#a6a6a6;">BS Compositing Bundle</div>
<div style="left:0.0px;top:716.7px;width:294.0px;height:26.6px;background:#242424;"></div>
<div style="left:0.0px;top:742.1px;width:294.0px;height:1.2px;background:#1e1e1e;"></div>
<svg style="left:9.0px;top:723.0px;" width="8" height="14" viewBox="0 0 8 14"><path d="M1.5 1.5 L6.5 7 L1.5 12.5" fill="none" stroke="#b4b4b4" stroke-width="1.8"/></svg>
<div class="t lm" style="left:24.5px;top:720.8px;height:19.6px;line-height:19.6px;font-size:15.1px;color:#a6a6a6;">CINEMA 4D</div>
<div style="left:0.0px;top:743.3px;width:294.0px;height:26.6px;background:#262626;"></div>
<div style="left:0.0px;top:768.6px;width:294.0px;height:1.2px;background:#1e1e1e;"></div>
<svg style="left:9.0px;top:749.5px;" width="8" height="14" viewBox="0 0 8 14"><path d="M1.5 1.5 L6.5 7 L1.5 12.5" fill="none" stroke="#b4b4b4" stroke-width="1.8"/></svg>
<div class="t lm" style="left:24.5px;top:747.4px;height:19.6px;line-height:19.6px;font-size:15.1px;color:#a6a6a6;">Cineplus</div>
<div style="left:0.0px;top:769.8px;width:294.0px;height:26.6px;background:#242424;"></div>
<div style="left:0.0px;top:795.2px;width:294.0px;height:1.2px;background:#1e1e1e;"></div>
<svg style="left:9.0px;top:776.1px;" width="8" height="14" viewBox="0 0 8 14"><path d="M1.5 1.5 L6.5 7 L1.5 12.5" fill="none" stroke="#b4b4b4" stroke-width="1.8"/></svg>
<div class="t lm" style="left:24.5px;top:773.9px;height:19.6px;line-height:19.6px;font-size:15.1px;color:#a6a6a6;">CI<span class="c" style="font-size:17.6px">工具箱</span></div>
</div>
<div style="left:2627.0px;top:157.0px;width:28.5px;height:782.0px;background:#202020;"></div>
<div style="left:2629.0px;top:159.5px;width:21.5px;height:133.5px;background:#3a3a3a;border-radius:10.5px;"></div>
<div style="left:2333.0px;top:938.5px;width:322.5px;height:1.5px;background:#141414;"></div>
<div style="left:2625.5px;top:940.0px;width:1.8px;height:25.0px;background:#141414;"></div>
<svg style="left:2597.0px;top:943.5px;" width="19" height="19" viewBox="0 0 19 19"><path d="M0 0 L19 0 L19 19 L8 19 L8 8 L0 8 Z" fill="#bdbdbd"/><path d="M0 10 L6.5 10 L6.5 17 Z" fill="#8e8e8e"/></svg>
<div style="left:2661.0px;top:76.0px;width:339.0px;height:891.0px;background:#232323;"></div>
<div class="t ls" style="left:2682.0px;top:83.4px;height:27.0px;line-height:27.0px;font-size:20.8px;color:#a2a2a2;letter-spacing:1.5px;">信息</div>
<div style="left:2662.5px;top:115.9px;width:319.0px;height:3.2px;background:#151515;"></div>
<div class="t ls" style="left:2682.0px;top:130.2px;height:27.0px;line-height:27.0px;font-size:20.8px;color:#a2a2a2;letter-spacing:1.5px;">音频</div>
<div style="left:2662.5px;top:162.8px;width:319.0px;height:3.2px;background:#151515;"></div>
<div class="t ls" style="left:2682.0px;top:177.1px;height:27.0px;line-height:27.0px;font-size:20.8px;color:#a2a2a2;letter-spacing:1.5px;">库</div>
<div style="left:2662.5px;top:209.7px;width:319.0px;height:3.2px;background:#151515;"></div>
<div class="t ls" style="left:2682.0px;top:224.9px;height:27.0px;line-height:27.0px;font-size:20.8px;color:#d2d2d2;letter-spacing:1.5px;">对齐</div>
<div style="left:2953.0px;top:231.6px;width:14.0px;height:1.8px;background:#c8c8c8;"></div>
<div style="left:2953.0px;top:236.6px;width:14.0px;height:1.8px;background:#c8c8c8;"></div>
<div style="left:2953.0px;top:241.6px;width:14.0px;height:1.8px;background:#c8c8c8;"></div>
<div class="t ls" style="left:2673.0px;top:264.1px;height:26.4px;line-height:26.4px;font-size:20.3px;color:#a2a2a2;letter-spacing:0.7px;">将图层对齐到:</div>
<div style="left:2806.5px;top:263.5px;width:173.5px;height:27.0px;background:#2a2a2a;border-radius:4px;"></div>
<div class="t ls" style="left:2820.0px;top:265.1px;height:26.4px;line-height:26.4px;font-size:20.3px;color:#434343;letter-spacing:1.5px;">选区</div>
<svg style="left:2954.0px;top:272.5px;" width="14" height="8" viewBox="0 0 14 8"><path d="M1 1 L7.0 6.5 L13 1" fill="none" stroke="#454545" stroke-width="1.8"/></svg>
<svg style="left:2677.0px;top:300.5px;" width="28" height="28" viewBox="0 0 28 28"><rect x="1" y="0" width="1.8" height="28" fill="#3e3e3e"/><rect x="4.5" y="4" width="12" height="7.5" fill="#3e3e3e"/><rect x="4.5" y="15.5" width="20" height="7.5" fill="#3e3e3e"/></svg>
<svg style="left:2730.5px;top:300.5px;" width="28" height="28" viewBox="0 0 28 28"><rect x="13.1" y="0" width="1.8" height="28" fill="#3e3e3e"/><rect x="8" y="4" width="12" height="7.5" fill="#3e3e3e"/><rect x="4" y="15.5" width="20" height="7.5" fill="#3e3e3e"/></svg>
<svg style="left:2785.0px;top:300.5px;" width="28" height="28" viewBox="0 0 28 28"><rect x="25.2" y="0" width="1.8" height="28" fill="#3e3e3e"/><rect x="11.5" y="4" width="12" height="7.5" fill="#3e3e3e"/><rect x="3.5" y="15.5" width="20" height="7.5" fill="#3e3e3e"/></svg>
<svg style="left:2837.0px;top:300.5px;" width="28" height="28" viewBox="0 0 28 28"><rect x="0" y="1" width="28" height="1.8" fill="#3e3e3e"/><rect x="5" y="4.5" width="7.5" height="20" fill="#3e3e3e"/><rect x="16" y="4.5" width="7.5" height="12" fill="#3e3e3e"/></svg>
<svg style="left:2890.5px;top:300.5px;" width="28" height="28" viewBox="0 0 28 28"><rect x="0" y="13.1" width="28" height="1.8" fill="#3e3e3e"/><rect x="5" y="4" width="7.5" height="20" fill="#3e3e3e"/><rect x="16" y="8" width="7.5" height="12" fill="#3e3e3e"/></svg>
<svg style="left:2944.0px;top:300.5px;" width="28" height="28" viewBox="0 0 28 28"><rect x="0" y="25.2" width="28" height="1.8" fill="#3e3e3e"/><rect x="5" y="3.5" width="7.5" height="20" fill="#3e3e3e"/><rect x="16" y="11.5" width="7.5" height="12" fill="#3e3e3e"/></svg>
<div style="left:2670.0px;top:336.0px;width:306.0px;height:2.0px;background:#303030;"></div>
<div class="t ls" style="left:2673.0px;top:339.6px;height:26.4px;line-height:26.4px;font-size:20.3px;color:#a2a2a2;">分布图层:</div>
<svg style="left:2677.0px;top:368.0px;" width="28" height="28" viewBox="0 0 28 28"><rect x="0" y="1" width="28" height="1.6" fill="#3e3e3e"/><rect x="0" y="14" width="28" height="1.6" fill="#3e3e3e"/><rect x="8" y="4" width="12" height="6.5" fill="#3e3e3e"/><rect x="5" y="17.5" width="18" height="7.5" fill="#3e3e3e"/></svg>
<svg style="left:2730.5px;top:368.0px;" width="28" height="28" viewBox="0 0 28 28"><rect x="0" y="6" width="28" height="1.6" fill="#3e3e3e"/><rect x="0" y="20" width="28" height="1.6" fill="#3e3e3e"/><rect x="8" y="3" width="12" height="7.5" fill="#3e3e3e"/><rect x="5" y="16.5" width="18" height="8" fill="#3e3e3e"/></svg>
<svg style="left:2785.0px;top:368.0px;" width="28" height="28" viewBox="0 0 28 28"><rect x="0" y="9.5" width="28" height="1.6" fill="#3e3e3e"/><rect x="0" y="24.5" width="28" height="1.6" fill="#3e3e3e"/><rect x="8" y="1" width="12" height="7.5" fill="#3e3e3e"/><rect x="5" y="15.5" width="18" height="8" fill="#3e3e3e"/></svg>
<svg style="left:2837.0px;top:368.0px;" width="28" height="28" viewBox="0 0 28 28"><rect x="1" y="0" width="1.6" height="28" fill="#3e3e3e"/><rect x="16.5" y="0" width="1.6" height="28" fill="#3e3e3e"/><rect x="4" y="5" width="8" height="18" fill="#3e3e3e"/><rect x="19.5" y="8" width="6.5" height="12" fill="#3e3e3e"/></svg>
<svg style="left:2890.5px;top:368.0px;" width="28" height="28" viewBox="0 0 28 28"><rect x="6.5" y="0" width="1.6" height="28" fill="#3e3e3e"/><rect x="20.5" y="0" width="1.6" height="28" fill="#3e3e3e"/><rect x="3" y="5" width="8.5" height="18" fill="#3e3e3e"/><rect x="17.5" y="8" width="7.5" height="12" fill="#3e3e3e"/></svg>
<svg style="left:2944.0px;top:368.0px;" width="28" height="28" viewBox="0 0 28 28"><rect x="11" y="0" width="1.6" height="28" fill="#3e3e3e"/><rect x="26" y="0" width="1.6" height="28" fill="#3e3e3e"/><rect x="2" y="5" width="8" height="18" fill="#3e3e3e"/><rect x="17.5" y="8" width="7" height="12" fill="#3e3e3e"/></svg>
<div style="left:2662.5px;top:418.0px;width:319.0px;height:3.2px;background:#151515;"></div>
<div class="t ls" style="left:2682.0px;top:431.1px;height:27.0px;line-height:27.0px;font-size:20.8px;color:#a2a2a2;letter-spacing:1.5px;">跟踪器</div>
<div style="left:2662.5px;top:464.9px;width:319.0px;height:3.2px;background:#151515;"></div>
<div class="t ls" style="left:2682.0px;top:477.9px;height:27.0px;line-height:27.0px;font-size:20.8px;color:#a2a2a2;letter-spacing:1.5px;">动态草图</div>
<div style="left:2662.5px;top:511.8px;width:319.0px;height:3.2px;background:#151515;"></div>
<div class="t ls" style="left:2682.0px;top:524.8px;height:27.0px;line-height:27.0px;font-size:20.8px;color:#a2a2a2;letter-spacing:1.5px;">平滑器</div>
<div style="left:2662.5px;top:558.6px;width:319.0px;height:3.2px;background:#151515;"></div>
<div class="t ls" style="left:2682.0px;top:571.7px;height:27.0px;line-height:27.0px;font-size:20.8px;color:#a2a2a2;letter-spacing:1.5px;">摇摆器</div>
<div style="left:2662.5px;top:605.5px;width:319.0px;height:3.2px;background:#151515;"></div>
<div class="t ls" style="left:2682.0px;top:618.6px;height:27.0px;line-height:27.0px;font-size:20.8px;color:#a2a2a2;letter-spacing:1.5px;">蒙版插值</div>
<div style="left:2662.5px;top:652.4px;width:319.0px;height:3.2px;background:#151515;"></div>
<div class="t ls" style="left:2682.0px;top:665.4px;height:27.0px;line-height:27.0px;font-size:20.8px;color:#a2a2a2;letter-spacing:1.5px;">段落</div>
<div style="left:2662.5px;top:699.2px;width:319.0px;height:3.2px;background:#151515;"></div>
<div class="t ls" style="left:2682.0px;top:712.3px;height:27.0px;line-height:27.0px;font-size:20.8px;color:#a2a2a2;letter-spacing:1.5px;">预览</div>
<div style="left:2662.5px;top:746.1px;width:319.0px;height:3.2px;background:#151515;"></div>
<div class="t ls" style="left:2682.0px;top:759.2px;height:27.0px;line-height:27.0px;font-size:20.8px;color:#a2a2a2;letter-spacing:1.5px;">字符</div>
<div style="left:2662.5px;top:793.0px;width:319.0px;height:3.2px;background:#151515;"></div>
<div style="left:1.5px;top:972.5px;width:2998.5px;height:573.5px;background:#232323;"></div>
<div class="t ls" style="left:47.0px;top:982.6px;height:26.5px;line-height:26.5px;font-size:20.4px;color:#8c8c8c;">渲染队列</div>
<svg style="left:189.0px;top:989.5px;" width="9" height="9" viewBox="0 0 9 9"><path d="M1 1 L8 8 M8 1 L1 8" stroke="#8a8a8a" stroke-width="1.5"/></svg>
<div style="left:212.5px;top:985.0px;width:16.5px;height:16.5px;background:#c4a57a;"></div>
<div class="t ls" style="left:247.0px;top:984.9px;height:23.4px;line-height:23.4px;font-size:18px;color:#d2d2d2;">18.<span class="c" style="font-size:20.2px">运动拖尾</span></div>
<div style="left:369.0px;top:989.6px;width:13.5px;height:1.8px;background:#c8c8c8;"></div>
<div style="left:369.0px;top:994.6px;width:13.5px;height:1.8px;background:#c8c8c8;"></div>
<div style="left:369.0px;top:999.6px;width:13.5px;height:1.8px;background:#c8c8c8;"></div>
<div style="left:190.0px;top:1010.5px;width:192.5px;height:2.6px;background:#d0d0d0;"></div>
<div class="t ls" style="left:40.0px;top:1020.4px;height:26.8px;line-height:26.8px;font-size:20.6px;color:#2d8ceb;font-weight:bold;letter-spacing:1.45px;">0:00:02:15</div>
<div class="t lm" style="left:18.5px;top:1047.5px;height:20.0px;line-height:20.0px;font-size:15.4px;color:#1e4f80;letter-spacing:0px;">00065 (25.00 fps)</div>
<div style="left:194.5px;top:1028.5px;width:585.0px;height:28.5px;background:#161616;border-radius:5px;border:1px solid #2c2c2c;"></div>
<svg style="left:203.5px;top:1032.5px;" width="30" height="20" viewBox="0 0 30 20"><circle cx="12" cy="7.5" r="5.6" fill="none" stroke="#b4b4b4" stroke-width="1.8"/><path d="M8 11.5 L2 18" stroke="#b4b4b4" stroke-width="2.6" stroke-linecap="round"/><path d="M19 13 L28 13 L23.5 17 Z" fill="#b4b4b4"/></svg>
<svg style="left:805.0px;top:1031.0px;" width="28" height="22" viewBox="0 0 28 22"><rect x="1" y="3" width="7" height="4" fill="#b4b4b4"/><path d="M8 5 L14 5 L14 16 L19 16 M14 7 L19 7" fill="none" stroke="#b4b4b4" stroke-width="1.8"/><rect x="19" y="4.5" width="6" height="4.5" fill="#b4b4b4"/><rect x="19" y="13.5" width="6" height="4.5" fill="#b4b4b4"/><path d="M20 19.5 L27 19.5 L23.5 22 Z" fill="#b4b4b4"/></svg>
<svg style="left:856.0px;top:1029.0px;" width="28" height="27" viewBox="0 0 28 27"><path d="M7.5 0 L7.5 13 M1 6.5 L14 6.5 M3 2 L12 11 M12 2 L3 11" stroke="#b4b4b4" stroke-width="1.7"/><circle cx="7.5" cy="6.5" r="2.6" fill="#b4b4b4"/><path d="M10.5 15 L18.5 11.5 L26.5 15 L26.5 22.5 L18.5 26 L10.5 22.5 Z M10.5 15 L18.5 18.5 L26.5 15 M18.5 18.5 L18.5 26" fill="none" stroke="#b4b4b4" stroke-width="1.8"/></svg>
<svg style="left:911.0px;top:1031.0px;" width="26" height="22" viewBox="0 0 26 22"><rect x="1" y="13" width="24" height="8" fill="#8a8a8a"/><path d="M2 12 L24 12 M13 12 L13 4" stroke="#b4b4b4" stroke-width="2.2"/><path d="M5 9 C6 0 20 0 21 9 Z" fill="#b4b4b4"/></svg>
<svg style="left:953.0px;top:1032.0px;" width="23" height="22" viewBox="0 0 23 22"><rect x="5" y="0" width="17" height="15" fill="#b4b4b4"/><rect x="8" y="6" width="11" height="2" fill="#232323"/><path d="M2 4 L2 19 L17 19" fill="none" stroke="#b4b4b4" stroke-width="2"/><path d="M3 21.2 L13 21.2" stroke="#b4b4b4" stroke-width="1.4" stroke-dasharray="1.5 1.5"/></svg>
<svg style="left:992.0px;top:1031.0px;" width="25" height="23" viewBox="0 0 25 23"><circle cx="9" cy="15" r="7" fill="none" stroke="#b4b4b4" stroke-width="1.6"/><circle cx="11.5" cy="12.5" r="7" fill="none" stroke="#b4b4b4" stroke-width="1.6"/><circle cx="15.5" cy="8.5" r="7.5" fill="#8c8c8c" stroke="#b4b4b4" stroke-width="1.6"/></svg>
<svg style="left:1046.0px;top:1030.0px;" width="26" height="25" viewBox="0 0 26 25"><rect x="2" y="4" width="22" height="19" fill="none" stroke="#b4b4b4" stroke-width="1.8"/><path d="M5 8 C14 8 12 19 21 19" fill="none" stroke="#b4b4b4" stroke-width="1.8"/><path d="M7 1 L7 4 M19 1 L19 4 M0 18 L2 18 M24 9 L26 9" stroke="#b4b4b4" stroke-width="1.6"/></svg>
<div style="left:1.5px;top:1071.5px;width:1094.5px;height:2.4px;background:#141414;"></div>
<div style="left:1.5px;top:1073.5px;width:1094.5px;height:28.0px;background:#2a2a2a;"></div>
<svg style="left:11.5px;top:1081.0px;" width="18" height="14" viewBox="0 0 18 14"><path d="M0.5 7 C4 -1 14 -1 17.5 7 C14 15 4 15 0.5 7 Z" fill="#b4b4b4"/><circle cx="9" cy="7" r="3.8" fill="#1f1f1f"/><circle cx="9" cy="7" r="1.8" fill="#b4b4b4"/></svg>
<svg style="left:35.0px;top:1078.0px;" width="20" height="20" viewBox="0 0 20 20"><path d="M0 6.5 L5 6.5 L11 1 L11 19 L5 13.5 L0 13.5 Z" fill="#b4b4b4"/><path d="M13.5 5.5 C16 8 16 12 13.5 14.5 M15.5 2.5 C20 7 20 13 15.5 17.5" fill="none" stroke="#b4b4b4" stroke-width="1.5"/></svg>
<svg style="left:61.0px;top:1081.5px;" width="13" height="13" viewBox="0 0 13 13"><circle cx="6.5" cy="6.5" r="6" fill="#b4b4b4"/></svg>
<svg style="left:83.0px;top:1078.5px;" width="15" height="18" viewBox="0 0 15 18"><rect x="0.5" y="8" width="14" height="9.5" rx="1" fill="#b4b4b4"/><path d="M3.5 8 L3.5 5.5 C3.5 0.8 11.5 0.8 11.5 5.5 L11.5 8" fill="none" stroke="#b4b4b4" stroke-width="2"/><rect x="6.5" y="11" width="2.2" height="3.6" fill="#2a2a2a"/></svg>
<div style="left:108.5px;top:1078.0px;width:1.6px;height:20.0px;background:#151515;"></div>
<div style="left:159.0px;top:1078.0px;width:1.6px;height:20.0px;background:#151515;"></div>
<div style="left:211.0px;top:1078.0px;width:1.6px;height:20.0px;background:#151515;"></div>
<div style="left:413.5px;top:1078.0px;width:1.6px;height:20.0px;background:#151515;"></div>
<div style="left:628.0px;top:1078.0px;width:1.6px;height:20.0px;background:#151515;"></div>
<div style="left:888.0px;top:1078.0px;width:1.6px;height:20.0px;background:#151515;"></div>
<div style="left:1070.5px;top:1078.0px;width:1.6px;height:20.0px;background:#151515;"></div>
<svg style="left:129.5px;top:1077.5px;" width="20.9" height="20.9" viewBox="0 0 22 22"><path d="M2 2 L11 2 L20 11 C21 12 21 13 20 14 L14 20 C13 21 12 21 11 20 L2 11 Z" fill="#b4b4b4"/><circle cx="6.5" cy="6.5" r="2" fill="#2b2b2b"/></svg>
<div class="t lm" style="left:169.0px;top:1078.9px;height:20.2px;line-height:20.2px;font-size:15.5px;color:#9a9a9a;">#</div>
<div class="t ls" style="left:222.0px;top:1074.4px;height:26.8px;line-height:26.8px;font-size:20.6px;color:#b2b2b2;letter-spacing:0.6px;">源名称</div>
<svg style="left:422.0px;top:1080.0px;" width="18" height="16" viewBox="0 0 18 16"><path d="M9 0.5 L9 14.5 M3.5 4.5 L14.5 4.5 L14.5 9 L3.5 9 Z M0.5 13 L17.5 13" fill="none" stroke="#b4b4b4" stroke-width="1.8"/></svg>
<svg style="left:447.0px;top:1080.0px;" width="16" height="16" viewBox="0 0 16 16"><circle cx="8" cy="8" r="3" fill="none" stroke="#b4b4b4" stroke-width="1.5"/><path d="M8 0.5 L8 3.5 M8 12.5 L8 15.5 M0.5 8 L3.5 8 M12.5 8 L15.5 8 M2.7 2.7 L4.8 4.8 M11.2 11.2 L13.3 13.3 M2.7 13.3 L4.8 11.2 M11.2 4.8 L13.3 2.7" stroke="#b4b4b4" stroke-width="1.5"/></svg>
<svg style="left:470.0px;top:1080.0px;" width="16" height="16" viewBox="0 0 16 16"><path d="M1 1 L15 15" stroke="#b4b4b4" stroke-width="2" stroke-dasharray="3.2 2"/></svg>
<div class="t ls" style="left:493.0px;top:1074.8px;height:25.4px;line-height:25.4px;font-size:19.5px;color:#b4b4b4;letter-spacing:-1px;"><i>f</i>x</div>
<svg style="left:516.0px;top:1079.5px;" width="19" height="17" viewBox="0 0 19 17"><rect x="0" y="0" width="19" height="17" fill="#b4b4b4"/><rect x="4.5" y="3" width="10" height="4.5" fill="#2a2a2a"/><rect x="4.5" y="9.5" width="10" height="4.5" fill="#2a2a2a"/></svg>
<svg style="left:539.0px;top:1078.5px;" width="21" height="20" viewBox="0 0 21 20"><circle cx="7.5" cy="13" r="6" fill="none" stroke="#b4b4b4" stroke-width="1.4"/><circle cx="9.5" cy="11" r="6" fill="none" stroke="#b4b4b4" stroke-width="1.4"/><circle cx="13" cy="7.5" r="6.5" fill="#8c8c8c" stroke="#b4b4b4" stroke-width="1.4"/></svg>
<svg style="left:564.0px;top:1080.0px;" width="17" height="17" viewBox="0 0 17 17"><circle cx="8.5" cy="8.5" r="7.5" fill="none" stroke="#b4b4b4" stroke-width="1.8"/><path d="M3.2 13.8 A7.5 7.5 0 0 0 13.8 3.2 Z" fill="#b4b4b4"/></svg>
<svg style="left:586.5px;top:1079.0px;" width="19" height="19" viewBox="0 0 19 19"><path d="M1.5 5.5 L9.5 1.5 L17.5 5.5 L17.5 13.5 L9.5 17.5 L1.5 13.5 Z M1.5 5.5 L9.5 9.5 L17.5 5.5 M9.5 9.5 L9.5 17.5" fill="none" stroke="#b4b4b4" stroke-width="1.7"/></svg>
<div class="t ls" style="left:640.5px;top:1074.4px;height:26.8px;line-height:26.8px;font-size:20.6px;color:#b2b2b2;">模式</div>
<div class="t ls" style="left:757.5px;top:1078.9px;height:20.2px;line-height:20.2px;font-size:15.5px;color:#7c7c7c;">T</div>
<div class="t ls" style="left:785.0px;top:1077.2px;height:22.6px;line-height:22.6px;font-size:17.4px;color:#8a8a8a;">TrkMat</div>
<div class="t ls" style="left:899.5px;top:1074.4px;height:26.8px;line-height:26.8px;font-size:20.6px;color:#b2b2b2;">父级和链接</div>
<div style="left:1.5px;top:1101.2px;width:1094.5px;height:2.2px;background:#0f0f0f;"></div>
<div style="left:1.5px;top:1103.4px;width:1094.5px;height:140.0999999999999px;overflow:hidden;background:#303030;">
<div style="left:0.0px;top:14.2px;width:1096.0px;height:1.6px;background:#262626;"></div>
<div style="left:8.5px;top:-10.3px;width:20.5px;height:21.0px;background:#222222;"></div>
<svg style="left:10.0px;top:-7.3px;" width="18" height="14" viewBox="0 0 18 14"><path d="M0.5 7 C4 -1 14 -1 17.5 7 C14 15 4 15 0.5 7 Z" fill="#c4c4c4"/><circle cx="9" cy="7" r="3.8" fill="#1f1f1f"/><circle cx="9" cy="7" r="1.8" fill="#c4c4c4"/></svg>
<div style="left:55.5px;top:-10.3px;width:19.5px;height:21.0px;background:#222222;"></div>
<div style="left:78.5px;top:-10.3px;width:20.0px;height:21.0px;background:#222222;"></div>
<svg style="left:117.5px;top:-6.8px;" width="8" height="14" viewBox="0 0 8 14"><path d="M1.5 1.5 L6.5 7 L1.5 12.5" fill="none" stroke="#b4b4b4" stroke-width="1.8"/></svg>
<div style="left:134.5px;top:-11.8px;width:24.0px;height:23.6px;background:#6e82ea;"></div>
<div class="t lf" style="left:168.0px;top:-10.1px;height:21.6px;line-height:21.6px;font-size:16.6px;color:#c4c4c4;font-weight:bold;">6</div>
<svg style="left:218.0px;top:-8.8px;" width="18" height="17" viewBox="0 0 18 17"><path d="M9 0.5 L11.2 6.3 L17.5 6.6 L12.6 10.5 L14.3 16.5 L9 13.1 L3.7 16.5 L5.4 10.5 L0.5 6.6 L6.8 6.3 Z" fill="#c4c4c4"/></svg>
<div class="t ls" style="left:248.5px;top:-9.7px;height:24.2px;line-height:24.2px;font-size:18.6px;color:#c4c4c4;font-weight:bold;letter-spacing:0.6px;">形状图层 <span class="lf" style="font-size:17px">5</span></div>
<div style="left:419.5px;top:-10.3px;width:19.5px;height:21.0px;background:#222222;"></div>
<div style="left:444.0px;top:-10.3px;width:19.5px;height:21.0px;background:#222222;"></div>
<div style="left:467.5px;top:-10.3px;width:19.5px;height:21.0px;background:#222222;"></div>
<svg style="left:420.5px;top:-8.3px;" width="18" height="16" viewBox="0 0 18 16"><path d="M9 0.5 L9 14.5 M3.5 4.5 L14.5 4.5 L14.5 9 L3.5 9 Z M0.5 13 L17.5 13" fill="none" stroke="#c4c4c4" stroke-width="1.8"/></svg>
<svg style="left:446.0px;top:-8.3px;" width="16" height="16" viewBox="0 0 16 16"><circle cx="8" cy="8" r="3" fill="none" stroke="#5c5c5c" stroke-width="1.5"/><path d="M8 0.5 L8 3.5 M8 12.5 L8 15.5 M0.5 8 L3.5 8 M12.5 8 L15.5 8 M2.7 2.7 L4.8 4.8 M11.2 11.2 L13.3 13.3 M2.7 13.3 L4.8 11.2 M11.2 4.8 L13.3 2.7" stroke="#5c5c5c" stroke-width="1.5"/></svg>
<svg style="left:469.5px;top:-7.8px;" width="16" height="16" viewBox="0 0 16 16"><path d="M1.5 14.5 L14.5 1.5" stroke="#c4c4c4" stroke-width="2"/></svg>
<div style="left:538.5px;top:-10.3px;width:19.0px;height:21.0px;background:#222222;"></div>
<div style="left:560.5px;top:-10.3px;width:20.0px;height:21.0px;background:#222222;"></div>
<div style="left:584.0px;top:-10.3px;width:20.0px;height:21.0px;background:#222222;"></div>
<div style="left:632.5px;top:-11.8px;width:107.0px;height:24.0px;background:#1d1d1d;"></div>
<div class="t ls" style="left:643.5px;top:-10.2px;height:24.2px;line-height:24.2px;font-size:18.6px;color:#c8c8c8;">正常</div>
<svg style="left:721.5px;top:-3.8px;" width="11.5" height="8" viewBox="0 0 11.5 8"><path d="M1 1 L5.75 6.5 L10.5 1" fill="none" stroke="#9a9a9a" stroke-width="1.8"/></svg>
<div style="left:748.0px;top:-10.3px;width:20.0px;height:21.0px;background:#222222;"></div>
<div style="left:778.5px;top:-11.8px;width:100.5px;height:24.0px;background:#1d1d1d;"></div>
<div class="t ls" style="left:788.5px;top:-10.2px;height:24.2px;line-height:24.2px;font-size:18.6px;color:#c8c8c8;">无</div>
<svg style="left:860.0px;top:-3.8px;" width="11.5" height="8" viewBox="0 0 11.5 8"><path d="M1 1 L5.75 6.5 L10.5 1" fill="none" stroke="#9a9a9a" stroke-width="1.8"/></svg>
<div style="left:885.5px;top:-15.4px;width:36.0px;height:29.6px;background:#353535;"></div>
<svg style="left:894.5px;top:-9.8px;" width="19.0" height="19.0" viewBox="0 0 19 19"><path transform="translate(19 0) scale(-1 1)" d="M9.5 9.8 C9.5 8 12.2 8.2 12.2 10.2 C12.2 13.2 7 13.4 6.6 9.8 C6.2 5.2 13.6 4.4 15.2 9.4 C16.6 15.6 8 18.6 3.6 13.4 C0.6 9.2 2.6 3.2 8.6 1.6" fill="none" stroke="#9a9a9a" stroke-width="1.5"/></svg>
<div style="left:923.5px;top:-11.8px;width:139.0px;height:24.0px;background:#1d1d1d;"></div>
<div class="t ls" style="left:934.0px;top:-10.2px;height:24.2px;line-height:24.2px;font-size:18.6px;color:#c8c8c8;">无</div>
<svg style="left:1043.5px;top:-3.8px;" width="11.5" height="8" viewBox="0 0 11.5 8"><path d="M1 1 L5.75 6.5 L10.5 1" fill="none" stroke="#9a9a9a" stroke-width="1.8"/></svg>
<div style="left:0.0px;top:45.5px;width:1096.0px;height:1.6px;background:#262626;"></div>
<div style="left:8.5px;top:20.9px;width:20.5px;height:21.0px;background:#222222;"></div>
<svg style="left:10.0px;top:23.9px;" width="18" height="14" viewBox="0 0 18 14"><path d="M0.5 7 C4 -1 14 -1 17.5 7 C14 15 4 15 0.5 7 Z" fill="#c4c4c4"/><circle cx="9" cy="7" r="3.8" fill="#1f1f1f"/><circle cx="9" cy="7" r="1.8" fill="#c4c4c4"/></svg>
<div style="left:55.5px;top:20.9px;width:19.5px;height:21.0px;background:#222222;"></div>
<div style="left:78.5px;top:20.9px;width:20.0px;height:21.0px;background:#222222;"></div>
<svg style="left:117.5px;top:24.4px;" width="8" height="14" viewBox="0 0 8 14"><path d="M1.5 1.5 L6.5 7 L1.5 12.5" fill="none" stroke="#b4b4b4" stroke-width="1.8"/></svg>
<div style="left:134.5px;top:19.4px;width:24.0px;height:23.6px;background:#6e82ea;"></div>
<div class="t lf" style="left:168.0px;top:21.1px;height:21.6px;line-height:21.6px;font-size:16.6px;color:#c4c4c4;font-weight:bold;">7</div>
<svg style="left:218.0px;top:22.4px;" width="18" height="17" viewBox="0 0 18 17"><path d="M9 0.5 L11.2 6.3 L17.5 6.6 L12.6 10.5 L14.3 16.5 L9 13.1 L3.7 16.5 L5.4 10.5 L0.5 6.6 L6.8 6.3 Z" fill="#c4c4c4"/></svg>
<div class="t ls" style="left:248.5px;top:21.5px;height:24.2px;line-height:24.2px;font-size:18.6px;color:#c4c4c4;font-weight:bold;letter-spacing:0.6px;">形状图层 <span class="lf" style="font-size:17px">4</span></div>
<div style="left:419.5px;top:20.9px;width:19.5px;height:21.0px;background:#222222;"></div>
<div style="left:444.0px;top:20.9px;width:19.5px;height:21.0px;background:#222222;"></div>
<div style="left:467.5px;top:20.9px;width:19.5px;height:21.0px;background:#222222;"></div>
<svg style="left:420.5px;top:22.9px;" width="18" height="16" viewBox="0 0 18 16"><path d="M9 0.5 L9 14.5 M3.5 4.5 L14.5 4.5 L14.5 9 L3.5 9 Z M0.5 13 L17.5 13" fill="none" stroke="#c4c4c4" stroke-width="1.8"/></svg>
<svg style="left:446.0px;top:22.9px;" width="16" height="16" viewBox="0 0 16 16"><circle cx="8" cy="8" r="3" fill="none" stroke="#5c5c5c" stroke-width="1.5"/><path d="M8 0.5 L8 3.5 M8 12.5 L8 15.5 M0.5 8 L3.5 8 M12.5 8 L15.5 8 M2.7 2.7 L4.8 4.8 M11.2 11.2 L13.3 13.3 M2.7 13.3 L4.8 11.2 M11.2 4.8 L13.3 2.7" stroke="#5c5c5c" stroke-width="1.5"/></svg>
<svg style="left:469.5px;top:23.4px;" width="16" height="16" viewBox="0 0 16 16"><path d="M1.5 14.5 L14.5 1.5" stroke="#c4c4c4" stroke-width="2"/></svg>
<div style="left:538.5px;top:20.9px;width:19.0px;height:21.0px;background:#222222;"></div>
<div style="left:560.5px;top:20.9px;width:20.0px;height:21.0px;background:#222222;"></div>
<div style="left:584.0px;top:20.9px;width:20.0px;height:21.0px;background:#222222;"></div>
<div style="left:632.5px;top:19.4px;width:107.0px;height:24.0px;background:#1d1d1d;"></div>
<div class="t ls" style="left:643.5px;top:21.0px;height:24.2px;line-height:24.2px;font-size:18.6px;color:#c8c8c8;">正常</div>
<svg style="left:721.5px;top:27.4px;" width="11.5" height="8" viewBox="0 0 11.5 8"><path d="M1 1 L5.75 6.5 L10.5 1" fill="none" stroke="#9a9a9a" stroke-width="1.8"/></svg>
<div style="left:748.0px;top:20.9px;width:20.0px;height:21.0px;background:#222222;"></div>
<div style="left:778.5px;top:19.4px;width:100.5px;height:24.0px;background:#1d1d1d;"></div>
<div class="t ls" style="left:788.5px;top:21.0px;height:24.2px;line-height:24.2px;font-size:18.6px;color:#c8c8c8;">无</div>
<svg style="left:860.0px;top:27.4px;" width="11.5" height="8" viewBox="0 0 11.5 8"><path d="M1 1 L5.75 6.5 L10.5 1" fill="none" stroke="#9a9a9a" stroke-width="1.8"/></svg>
<div style="left:885.5px;top:15.8px;width:36.0px;height:29.6px;background:#353535;"></div>
<svg style="left:894.5px;top:21.4px;" width="19.0" height="19.0" viewBox="0 0 19 19"><path transform="translate(19 0) scale(-1 1)" d="M9.5 9.8 C9.5 8 12.2 8.2 12.2 10.2 C12.2 13.2 7 13.4 6.6 9.8 C6.2 5.2 13.6 4.4 15.2 9.4 C16.6 15.6 8 18.6 3.6 13.4 C0.6 9.2 2.6 3.2 8.6 1.6" fill="none" stroke="#9a9a9a" stroke-width="1.5"/></svg>
<div style="left:923.5px;top:19.4px;width:139.0px;height:24.0px;background:#1d1d1d;"></div>
<div class="t ls" style="left:934.0px;top:21.0px;height:24.2px;line-height:24.2px;font-size:18.6px;color:#c8c8c8;">无</div>
<svg style="left:1043.5px;top:27.4px;" width="11.5" height="8" viewBox="0 0 11.5 8"><path d="M1 1 L5.75 6.5 L10.5 1" fill="none" stroke="#9a9a9a" stroke-width="1.8"/></svg>
<div style="left:0.0px;top:76.7px;width:1096.0px;height:1.6px;background:#262626;"></div>
<div style="left:8.5px;top:52.2px;width:20.5px;height:21.0px;background:#222222;"></div>
<svg style="left:10.0px;top:55.2px;" width="18" height="14" viewBox="0 0 18 14"><path d="M0.5 7 C4 -1 14 -1 17.5 7 C14 15 4 15 0.5 7 Z" fill="#c4c4c4"/><circle cx="9" cy="7" r="3.8" fill="#1f1f1f"/><circle cx="9" cy="7" r="1.8" fill="#c4c4c4"/></svg>
<div style="left:55.5px;top:52.2px;width:19.5px;height:21.0px;background:#222222;"></div>
<div style="left:78.5px;top:52.2px;width:20.0px;height:21.0px;background:#222222;"></div>
<svg style="left:117.5px;top:55.7px;" width="8" height="14" viewBox="0 0 8 14"><path d="M1.5 1.5 L6.5 7 L1.5 12.5" fill="none" stroke="#b4b4b4" stroke-width="1.8"/></svg>
<div style="left:134.5px;top:50.7px;width:24.0px;height:23.6px;background:#6e82ea;"></div>
<div class="t lf" style="left:168.0px;top:52.4px;height:21.6px;line-height:21.6px;font-size:16.6px;color:#c4c4c4;font-weight:bold;">8</div>
<svg style="left:218.0px;top:53.7px;" width="18" height="17" viewBox="0 0 18 17"><path d="M9 0.5 L11.2 6.3 L17.5 6.6 L12.6 10.5 L14.3 16.5 L9 13.1 L3.7 16.5 L5.4 10.5 L0.5 6.6 L6.8 6.3 Z" fill="#c4c4c4"/></svg>
<div class="t ls" style="left:248.5px;top:52.8px;height:24.2px;line-height:24.2px;font-size:18.6px;color:#c4c4c4;font-weight:bold;letter-spacing:0.6px;">形状图层 <span class="lf" style="font-size:17px">3</span></div>
<div style="left:419.5px;top:52.2px;width:19.5px;height:21.0px;background:#222222;"></div>
<div style="left:444.0px;top:52.2px;width:19.5px;height:21.0px;background:#222222;"></div>
<div style="left:467.5px;top:52.2px;width:19.5px;height:21.0px;background:#222222;"></div>
<svg style="left:420.5px;top:54.2px;" width="18" height="16" viewBox="0 0 18 16"><path d="M9 0.5 L9 14.5 M3.5 4.5 L14.5 4.5 L14.5 9 L3.5 9 Z M0.5 13 L17.5 13" fill="none" stroke="#c4c4c4" stroke-width="1.8"/></svg>
<svg style="left:446.0px;top:54.2px;" width="16" height="16" viewBox="0 0 16 16"><circle cx="8" cy="8" r="3" fill="none" stroke="#5c5c5c" stroke-width="1.5"/><path d="M8 0.5 L8 3.5 M8 12.5 L8 15.5 M0.5 8 L3.5 8 M12.5 8 L15.5 8 M2.7 2.7 L4.8 4.8 M11.2 11.2 L13.3 13.3 M2.7 13.3 L4.8 11.2 M11.2 4.8 L13.3 2.7" stroke="#5c5c5c" stroke-width="1.5"/></svg>
<svg style="left:469.5px;top:54.7px;" width="16" height="16" viewBox="0 0 16 16"><path d="M1.5 14.5 L14.5 1.5" stroke="#c4c4c4" stroke-width="2"/></svg>
<div style="left:538.5px;top:52.2px;width:19.0px;height:21.0px;background:#222222;"></div>
<div style="left:560.5px;top:52.2px;width:20.0px;height:21.0px;background:#222222;"></div>
<div style="left:584.0px;top:52.2px;width:20.0px;height:21.0px;background:#222222;"></div>
<div style="left:632.5px;top:50.7px;width:107.0px;height:24.0px;background:#1d1d1d;"></div>
<div class="t ls" style="left:643.5px;top:52.3px;height:24.2px;line-height:24.2px;font-size:18.6px;color:#c8c8c8;">正常</div>
<svg style="left:721.5px;top:58.7px;" width="11.5" height="8" viewBox="0 0 11.5 8"><path d="M1 1 L5.75 6.5 L10.5 1" fill="none" stroke="#9a9a9a" stroke-width="1.8"/></svg>
<div style="left:748.0px;top:52.2px;width:20.0px;height:21.0px;background:#222222;"></div>
<div style="left:778.5px;top:50.7px;width:100.5px;height:24.0px;background:#1d1d1d;"></div>
<div class="t ls" style="left:788.5px;top:52.3px;height:24.2px;line-height:24.2px;font-size:18.6px;color:#c8c8c8;">无</div>
<svg style="left:860.0px;top:58.7px;" width="11.5" height="8" viewBox="0 0 11.5 8"><path d="M1 1 L5.75 6.5 L10.5 1" fill="none" stroke="#9a9a9a" stroke-width="1.8"/></svg>
<div style="left:885.5px;top:47.1px;width:36.0px;height:29.6px;background:#353535;"></div>
<svg style="left:894.5px;top:52.7px;" width="19.0" height="19.0" viewBox="0 0 19 19"><path transform="translate(19 0) scale(-1 1)" d="M9.5 9.8 C9.5 8 12.2 8.2 12.2 10.2 C12.2 13.2 7 13.4 6.6 9.8 C6.2 5.2 13.6 4.4 15.2 9.4 C16.6 15.6 8 18.6 3.6 13.4 C0.6 9.2 2.6 3.2 8.6 1.6" fill="none" stroke="#9a9a9a" stroke-width="1.5"/></svg>
<div style="left:923.5px;top:50.7px;width:139.0px;height:24.0px;background:#1d1d1d;"></div>
<div class="t ls" style="left:934.0px;top:52.3px;height:24.2px;line-height:24.2px;font-size:18.6px;color:#c8c8c8;">无</div>
<svg style="left:1043.5px;top:58.7px;" width="11.5" height="8" viewBox="0 0 11.5 8"><path d="M1 1 L5.75 6.5 L10.5 1" fill="none" stroke="#9a9a9a" stroke-width="1.8"/></svg>
<div style="left:0.0px;top:108.0px;width:1096.0px;height:1.6px;background:#262626;"></div>
<div style="left:8.5px;top:83.4px;width:20.5px;height:21.0px;background:#222222;"></div>
<svg style="left:10.0px;top:86.4px;" width="18" height="14" viewBox="0 0 18 14"><path d="M0.5 7 C4 -1 14 -1 17.5 7 C14 15 4 15 0.5 7 Z" fill="#c4c4c4"/><circle cx="9" cy="7" r="3.8" fill="#1f1f1f"/><circle cx="9" cy="7" r="1.8" fill="#c4c4c4"/></svg>
<div style="left:55.5px;top:83.4px;width:19.5px;height:21.0px;background:#222222;"></div>
<div style="left:78.5px;top:83.4px;width:20.0px;height:21.0px;background:#222222;"></div>
<svg style="left:117.5px;top:86.9px;" width="8" height="14" viewBox="0 0 8 14"><path d="M1.5 1.5 L6.5 7 L1.5 12.5" fill="none" stroke="#b4b4b4" stroke-width="1.8"/></svg>
<div style="left:134.5px;top:81.9px;width:24.0px;height:23.6px;background:#6e82ea;"></div>
<div class="t lf" style="left:168.0px;top:83.6px;height:21.6px;line-height:21.6px;font-size:16.6px;color:#c4c4c4;font-weight:bold;">9</div>
<svg style="left:218.0px;top:84.9px;" width="18" height="17" viewBox="0 0 18 17"><path d="M9 0.5 L11.2 6.3 L17.5 6.6 L12.6 10.5 L14.3 16.5 L9 13.1 L3.7 16.5 L5.4 10.5 L0.5 6.6 L6.8 6.3 Z" fill="#c4c4c4"/></svg>
<div class="t ls" style="left:248.5px;top:84.0px;height:24.2px;line-height:24.2px;font-size:18.6px;color:#c4c4c4;font-weight:bold;letter-spacing:0.6px;">形状图层 <span class="lf" style="font-size:17px">2</span></div>
<div style="left:419.5px;top:83.4px;width:19.5px;height:21.0px;background:#222222;"></div>
<div style="left:444.0px;top:83.4px;width:19.5px;height:21.0px;background:#222222;"></div>
<div style="left:467.5px;top:83.4px;width:19.5px;height:21.0px;background:#222222;"></div>
<svg style="left:420.5px;top:85.4px;" width="18" height="16" viewBox="0 0 18 16"><path d="M9 0.5 L9 14.5 M3.5 4.5 L14.5 4.5 L14.5 9 L3.5 9 Z M0.5 13 L17.5 13" fill="none" stroke="#c4c4c4" stroke-width="1.8"/></svg>
<svg style="left:446.0px;top:85.4px;" width="16" height="16" viewBox="0 0 16 16"><circle cx="8" cy="8" r="3" fill="none" stroke="#5c5c5c" stroke-width="1.5"/><path d="M8 0.5 L8 3.5 M8 12.5 L8 15.5 M0.5 8 L3.5 8 M12.5 8 L15.5 8 M2.7 2.7 L4.8 4.8 M11.2 11.2 L13.3 13.3 M2.7 13.3 L4.8 11.2 M11.2 4.8 L13.3 2.7" stroke="#5c5c5c" stroke-width="1.5"/></svg>
<svg style="left:469.5px;top:85.9px;" width="16" height="16" viewBox="0 0 16 16"><path d="M1.5 14.5 L14.5 1.5" stroke="#c4c4c4" stroke-width="2"/></svg>
<div style="left:538.5px;top:83.4px;width:19.0px;height:21.0px;background:#222222;"></div>
<div style="left:560.5px;top:83.4px;width:20.0px;height:21.0px;background:#222222;"></div>
<div style="left:584.0px;top:83.4px;width:20.0px;height:21.0px;background:#222222;"></div>
<div style="left:632.5px;top:81.9px;width:107.0px;height:24.0px;background:#1d1d1d;"></div>
<div class="t ls" style="left:643.5px;top:83.5px;height:24.2px;line-height:24.2px;font-size:18.6px;color:#c8c8c8;">正常</div>
<svg style="left:721.5px;top:89.9px;" width="11.5" height="8" viewBox="0 0 11.5 8"><path d="M1 1 L5.75 6.5 L10.5 1" fill="none" stroke="#9a9a9a" stroke-width="1.8"/></svg>
<div style="left:748.0px;top:83.4px;width:20.0px;height:21.0px;background:#222222;"></div>
<div style="left:778.5px;top:81.9px;width:100.5px;height:24.0px;background:#1d1d1d;"></div>
<div class="t ls" style="left:788.5px;top:83.5px;height:24.2px;line-height:24.2px;font-size:18.6px;color:#c8c8c8;">无</div>
<svg style="left:860.0px;top:89.9px;" width="11.5" height="8" viewBox="0 0 11.5 8"><path d="M1 1 L5.75 6.5 L10.5 1" fill="none" stroke="#9a9a9a" stroke-width="1.8"/></svg>
<div style="left:885.5px;top:78.3px;width:36.0px;height:29.6px;background:#353535;"></div>
<svg style="left:894.5px;top:83.9px;" width="19.0" height="19.0" viewBox="0 0 19 19"><path transform="translate(19 0) scale(-1 1)" d="M9.5 9.8 C9.5 8 12.2 8.2 12.2 10.2 C12.2 13.2 7 13.4 6.6 9.8 C6.2 5.2 13.6 4.4 15.2 9.4 C16.6 15.6 8 18.6 3.6 13.4 C0.6 9.2 2.6 3.2 8.6 1.6" fill="none" stroke="#9a9a9a" stroke-width="1.5"/></svg>
<div style="left:923.5px;top:81.9px;width:139.0px;height:24.0px;background:#1d1d1d;"></div>
<div class="t ls" style="left:934.0px;top:83.5px;height:24.2px;line-height:24.2px;font-size:18.6px;color:#c8c8c8;">无</div>
<svg style="left:1043.5px;top:89.9px;" width="11.5" height="8" viewBox="0 0 11.5 8"><path d="M1 1 L5.75 6.5 L10.5 1" fill="none" stroke="#9a9a9a" stroke-width="1.8"/></svg>
<div style="left:0.0px;top:139.2px;width:1096.0px;height:1.6px;background:#262626;"></div>
<div style="left:8.5px;top:114.7px;width:20.5px;height:21.0px;background:#222222;"></div>
<svg style="left:10.0px;top:117.7px;" width="18" height="14" viewBox="0 0 18 14"><path d="M0.5 7 C4 -1 14 -1 17.5 7 C14 15 4 15 0.5 7 Z" fill="#c4c4c4"/><circle cx="9" cy="7" r="3.8" fill="#1f1f1f"/><circle cx="9" cy="7" r="1.8" fill="#c4c4c4"/></svg>
<div style="left:55.5px;top:114.7px;width:19.5px;height:21.0px;background:#222222;"></div>
<div style="left:78.5px;top:114.7px;width:20.0px;height:21.0px;background:#222222;"></div>
<svg style="left:116.5px;top:121.2px;" width="14" height="8" viewBox="0 0 14 8"><path d="M1 1 L7 6.5 L13 1" fill="none" stroke="#b4b4b4" stroke-width="1.8"/></svg>
<div style="left:134.5px;top:113.2px;width:24.0px;height:23.6px;background:#6e82ea;"></div>
<div class="t lf" style="left:168.0px;top:114.9px;height:21.6px;line-height:21.6px;font-size:16.6px;color:#c4c4c4;font-weight:bold;">10</div>
<svg style="left:218.0px;top:116.2px;" width="18" height="17" viewBox="0 0 18 17"><path d="M9 0.5 L11.2 6.3 L17.5 6.6 L12.6 10.5 L14.3 16.5 L9 13.1 L3.7 16.5 L5.4 10.5 L0.5 6.6 L6.8 6.3 Z" fill="#c4c4c4"/></svg>
<div class="t ls" style="left:248.5px;top:115.3px;height:24.2px;line-height:24.2px;font-size:18.6px;color:#c4c4c4;font-weight:bold;letter-spacing:0.6px;">形状图层 <span class="lf" style="font-size:17px">1</span></div>
<div style="left:419.5px;top:114.7px;width:19.5px;height:21.0px;background:#222222;"></div>
<div style="left:444.0px;top:114.7px;width:19.5px;height:21.0px;background:#222222;"></div>
<div style="left:467.5px;top:114.7px;width:19.5px;height:21.0px;background:#222222;"></div>
<svg style="left:420.5px;top:116.7px;" width="18" height="16" viewBox="0 0 18 16"><path d="M9 0.5 L9 14.5 M3.5 4.5 L14.5 4.5 L14.5 9 L3.5 9 Z M0.5 13 L17.5 13" fill="none" stroke="#c4c4c4" stroke-width="1.8"/></svg>
<svg style="left:446.0px;top:116.7px;" width="16" height="16" viewBox="0 0 16 16"><circle cx="8" cy="8" r="3" fill="none" stroke="#5c5c5c" stroke-width="1.5"/><path d="M8 0.5 L8 3.5 M8 12.5 L8 15.5 M0.5 8 L3.5 8 M12.5 8 L15.5 8 M2.7 2.7 L4.8 4.8 M11.2 11.2 L13.3 13.3 M2.7 13.3 L4.8 11.2 M11.2 4.8 L13.3 2.7" stroke="#5c5c5c" stroke-width="1.5"/></svg>
<svg style="left:469.5px;top:117.2px;" width="16" height="16" viewBox="0 0 16 16"><path d="M1.5 14.5 L14.5 1.5" stroke="#c4c4c4" stroke-width="2"/></svg>
<div style="left:538.5px;top:114.7px;width:19.0px;height:21.0px;background:#222222;"></div>
<div style="left:560.5px;top:114.7px;width:20.0px;height:21.0px;background:#222222;"></div>
<div style="left:584.0px;top:114.7px;width:20.0px;height:21.0px;background:#222222;"></div>
<div style="left:632.5px;top:113.2px;width:107.0px;height:24.0px;background:#1d1d1d;"></div>
<div class="t ls" style="left:643.5px;top:114.8px;height:24.2px;line-height:24.2px;font-size:18.6px;color:#c8c8c8;">正常</div>
<svg style="left:721.5px;top:121.2px;" width="11.5" height="8" viewBox="0 0 11.5 8"><path d="M1 1 L5.75 6.5 L10.5 1" fill="none" stroke="#9a9a9a" stroke-width="1.8"/></svg>
<div style="left:748.0px;top:114.7px;width:20.0px;height:21.0px;background:#222222;"></div>
<div style="left:778.5px;top:113.2px;width:100.5px;height:24.0px;background:#1d1d1d;"></div>
<div class="t ls" style="left:788.5px;top:114.8px;height:24.2px;line-height:24.2px;font-size:18.6px;color:#c8c8c8;">无</div>
<svg style="left:860.0px;top:121.2px;" width="11.5" height="8" viewBox="0 0 11.5 8"><path d="M1 1 L5.75 6.5 L10.5 1" fill="none" stroke="#9a9a9a" stroke-width="1.8"/></svg>
<div style="left:885.5px;top:109.6px;width:36.0px;height:29.6px;background:#353535;"></div>
<svg style="left:894.5px;top:115.2px;" width="19.0" height="19.0" viewBox="0 0 19 19"><path transform="translate(19 0) scale(-1 1)" d="M9.5 9.8 C9.5 8 12.2 8.2 12.2 10.2 C12.2 13.2 7 13.4 6.6 9.8 C6.2 5.2 13.6 4.4 15.2 9.4 C16.6 15.6 8 18.6 3.6 13.4 C0.6 9.2 2.6 3.2 8.6 1.6" fill="none" stroke="#9a9a9a" stroke-width="1.5"/></svg>
<div style="left:923.5px;top:113.2px;width:139.0px;height:24.0px;background:#1d1d1d;"></div>
<div class="t ls" style="left:934.0px;top:114.8px;height:24.2px;line-height:24.2px;font-size:18.6px;color:#c8c8c8;">无</div>
<svg style="left:1043.5px;top:121.2px;" width="11.5" height="8" viewBox="0 0 11.5 8"><path d="M1 1 L5.75 6.5 L10.5 1" fill="none" stroke="#9a9a9a" stroke-width="1.8"/></svg>
</div>
<div style="left:1.5px;top:1243.5px;width:1094.5px;height:302.5px;background:#262626;"></div>
<div style="left:1.5px;top:1243.5px;width:1094.5px;height:1.5px;background:#1c1c1c;"></div>
<div style="left:1.5px;top:1245.0px;width:1094.5px;height:30.0px;background:#282828;"></div>
<div style="left:1.5px;top:1275.0px;width:1094.5px;height:1.5px;background:#1e1e1e;"></div>
<svg style="left:14.0px;top:1254.0px;" width="10" height="13" viewBox="0 0 10 13"><path d="M10 0 L10 13 L0 6.5 Z" fill="#b4b4b4"/></svg>
<svg style="left:37.0px;top:1253.5px;" width="14" height="14" viewBox="0 0 14 14"><path d="M7 0.8 L13.2 7 L7 13.2 L0.8 7 Z" fill="#3a3a3a" stroke="#b4b4b4" stroke-width="1.4"/><path d="M7 3.5 L10.5 7 L7 10.5 L3.5 7 Z" fill="#8a8a8a"/></svg>
<svg style="left:62.5px;top:1254.0px;" width="10" height="13" viewBox="0 0 10 13"><path d="M0 0 L0 13 L10 6.5 Z" fill="#b4b4b4"/></svg>
<svg style="left:182.0px;top:1257.5px;" width="11.5" height="8" viewBox="0 0 11.5 8"><path d="M1 1 L5.75 6.5 L10.5 1" fill="none" stroke="#b4b4b4" stroke-width="1.8"/></svg>
<div style="left:203.5px;top:1246.0px;width:25.0px;height:28.5px;background:#1c1c1c;border:1px solid #2e2e2e;"></div>
<svg style="left:206.5px;top:1249.5px;" width="18" height="21" viewBox="0 0 18 21"><circle cx="9" cy="12.5" r="7.3" fill="none" stroke="#2d8ceb" stroke-width="2"/><path d="M6 1.5 L12 1.5 M9 1.5 L9 5" stroke="#2d8ceb" stroke-width="2"/><path d="M9 12.5 L12.5 8" stroke="#2d8ceb" stroke-width="1.8"/></svg>
<svg style="left:234.5px;top:1251.5px;" width="18" height="18" viewBox="0 0 18 18"><path d="M1.2 0 L1.2 16.8 L18 16.8" fill="none" stroke="#b4b4b4" stroke-width="1.8"/><path d="M3.5 14 L8 6.5 L11 11 L15.5 4" fill="none" stroke="#b4b4b4" stroke-width="1.6"/></svg>
<div class="t ls" style="left:266.5px;top:1250.9px;height:21.1px;line-height:21.1px;font-size:16.2px;color:#b4b4b4;">位置</div>
<div class="t ls" style="left:423.5px;top:1250.7px;height:21.6px;line-height:21.6px;font-size:16.6px;color:#d63434;letter-spacing:0.2px;">559.1, 366.6</div>
<svg style="left:916.5px;top:1246.0px;" width="19.0" height="19.0" viewBox="0 0 19 19"><path transform="translate(19 0) scale(-1 1)" d="M9.5 9.8 C9.5 8 12.2 8.2 12.2 10.2 C12.2 13.2 7 13.4 6.6 9.8 C6.2 5.2 13.6 4.4 15.2 9.4 C16.6 15.6 8 18.6 3.6 13.4 C0.6 9.2 2.6 3.2 8.6 1.6" fill="none" stroke="#9a9a9a" stroke-width="1.5"/></svg>
<div style="left:447.5px;top:1275.5px;width:23.0px;height:25.0px;background:#1c1c1c;border:1px solid #2c2c2c;"></div>
<div style="left:451.5px;top:1282.5px;width:14.5px;height:3.4px;background:#2d8ceb;"></div>
<div style="left:451.5px;top:1289.2px;width:14.5px;height:3.4px;background:#2d8ceb;"></div>
<svg style="left:475.5px;top:1279.0px;" width="18" height="18" viewBox="0 0 18 18"><path d="M1.2 0 L1.2 16.8 L18 16.8" fill="none" stroke="#b4b4b4" stroke-width="1.8"/><path d="M3.5 14 L8 6.5 L11 11 L15.5 4" fill="none" stroke="#b4b4b4" stroke-width="1.6"/></svg>
<svg style="left:501.5px;top:1278.5px;" width="19.0" height="19.0" viewBox="0 0 19 19"><path transform="translate(19 0) scale(-1 1)" d="M9.5 9.8 C9.5 8 12.2 8.2 12.2 10.2 C12.2 13.2 7 13.4 6.6 9.8 C6.2 5.2 13.6 4.4 15.2 9.4 C16.6 15.6 8 18.6 3.6 13.4 C0.6 9.2 2.6 3.2 8.6 1.6" fill="none" stroke="#b4b4b4" stroke-width="1.5"/></svg>
<svg style="left:529.0px;top:1279.0px;" width="18" height="18" viewBox="0 0 18 18"><circle cx="9" cy="9" r="8.6" fill="#d0d0d0"/><path d="M6.5 4.2 L13 9 L6.5 13.8 Z" fill="#232323"/></svg>
<div class="t ls" style="left:242.0px;top:1341.2px;height:21.1px;line-height:21.1px;font-size:16.2px;color:#b4b4b4;letter-spacing:0.8px;"><span class="c" style="font-size:16.8px">表达式</span>:&nbsp; <span class="c" style="font-size:16.8px">位置</span></div>
<div style="left:1.5px;top:1424.5px;width:1094.5px;height:1.5px;background:#1e1e1e;"></div>
<div style="left:1.5px;top:1426.0px;width:1094.5px;height:29.5px;background:#282828;"></div>
<div style="left:1.5px;top:1455.5px;width:1094.5px;height:1.5px;background:#1e1e1e;"></div>
<svg style="left:182.0px;top:1438.5px;" width="11.5" height="8" viewBox="0 0 11.5 8"><path d="M1 1 L5.75 6.5 L10.5 1" fill="none" stroke="#b4b4b4" stroke-width="1.8"/></svg>
<svg style="left:206.5px;top:1430.5px;" width="18" height="21" viewBox="0 0 18 21"><circle cx="9" cy="12.5" r="7.3" fill="none" stroke="#b4b4b4" stroke-width="2"/><path d="M6 1.5 L12 1.5 M9 1.5 L9 5" stroke="#b4b4b4" stroke-width="2"/><path d="M9 12.5 L12.5 8" stroke="#b4b4b4" stroke-width="1.8"/></svg>
<div class="t ls" style="left:236.5px;top:1432.2px;height:21.1px;line-height:21.1px;font-size:16.2px;color:#b4b4b4;letter-spacing:0.6px;"><span class="c" style="font-size:16.8px">不透明度</span></div>
<div class="t ls" style="left:423.5px;top:1431.7px;height:21.6px;line-height:21.6px;font-size:16.6px;color:#d63434;">13%</div>
<svg style="left:916.5px;top:1428.0px;" width="19.0" height="19.0" viewBox="0 0 19 19"><path transform="translate(19 0) scale(-1 1)" d="M9.5 9.8 C9.5 8 12.2 8.2 12.2 10.2 C12.2 13.2 7 13.4 6.6 9.8 C6.2 5.2 13.6 4.4 15.2 9.4 C16.6 15.6 8 18.6 3.6 13.4 C0.6 9.2 2.6 3.2 8.6 1.6" fill="none" stroke="#9a9a9a" stroke-width="1.5"/></svg>
<div style="left:447.5px;top:1456.5px;width:23.0px;height:25.0px;background:#1c1c1c;border:1px solid #2c2c2c;"></div>
<div style="left:451.5px;top:1463.5px;width:14.5px;height:3.4px;background:#2d8ceb;"></div>
<div style="left:451.5px;top:1470.2px;width:14.5px;height:3.4px;background:#2d8ceb;"></div>
<svg style="left:475.5px;top:1460.0px;" width="18" height="18" viewBox="0 0 18 18"><path d="M1.2 0 L1.2 16.8 L18 16.8" fill="none" stroke="#b4b4b4" stroke-width="1.8"/><path d="M3.5 14 L8 6.5 L11 11 L15.5 4" fill="none" stroke="#b4b4b4" stroke-width="1.6"/></svg>
<svg style="left:501.5px;top:1459.5px;" width="19.0" height="19.0" viewBox="0 0 19 19"><path transform="translate(19 0) scale(-1 1)" d="M9.5 9.8 C9.5 8 12.2 8.2 12.2 10.2 C12.2 13.2 7 13.4 6.6 9.8 C6.2 5.2 13.6 4.4 15.2 9.4 C16.6 15.6 8 18.6 3.6 13.4 C0.6 9.2 2.6 3.2 8.6 1.6" fill="none" stroke="#b4b4b4" stroke-width="1.5"/></svg>
<svg style="left:529.0px;top:1460.0px;" width="18" height="18" viewBox="0 0 18 18"><circle cx="9" cy="9" r="8.6" fill="#d0d0d0"/><path d="M6.5 4.2 L13 9 L6.5 13.8 Z" fill="#232323"/></svg>
<div class="t ls" style="left:242.0px;top:1498.7px;height:21.1px;line-height:21.1px;font-size:16.2px;color:#b4b4b4;letter-spacing:0.8px;"><span class="c" style="font-size:16.8px">表达式</span>:&nbsp; <span class="c" style="font-size:16.8px">不透明度</span></div>
<div style="left:1095.4px;top:1071.5px;width:1.7px;height:474.5px;background:#050505;"></div>
<div style="left:1097.0px;top:1024.8px;width:1877.0px;height:1.2px;background:#161616;"></div>
<div style="left:1107.0px;top:1026.0px;width:1856.5px;height:13.3px;background:#6a6a6a;"></div>
<div style="left:1097.0px;top:1039.3px;width:1877.0px;height:1.2px;background:#141414;"></div>
<div style="left:1097.5px;top:1026.0px;width:10.0px;height:13.3px;background:#2d8ceb;border-radius:7px 0 0 7px;"></div>
<div style="left:2963.5px;top:1026.0px;width:10.0px;height:13.3px;background:#2d8ceb;border-radius:0 7px 7px 0;"></div>
<div class="t ls" style="left:1100.0px;top:1042.3px;height:20.3px;line-height:20.3px;font-size:15.6px;color:#a8a8a8;letter-spacing:1.2px;">:00s</div>
<div style="left:1107.7px;top:1063.0px;width:1.6px;height:7.0px;background:#b0b0b0;"></div>
<div class="t ls" style="left:1464.0px;top:1042.3px;height:20.3px;line-height:20.3px;font-size:15.6px;color:#a8a8a8;letter-spacing:1.2px;">01s</div>
<div style="left:1478.7px;top:1063.0px;width:1.6px;height:7.0px;background:#b0b0b0;"></div>
<div class="t ls" style="left:1835.0px;top:1042.3px;height:20.3px;line-height:20.3px;font-size:15.6px;color:#a8a8a8;letter-spacing:1.2px;">02s</div>
<div style="left:1849.7px;top:1063.0px;width:1.6px;height:7.0px;background:#b0b0b0;"></div>
<div class="t ls" style="left:2206.0px;top:1042.3px;height:20.3px;line-height:20.3px;font-size:15.6px;color:#a8a8a8;letter-spacing:1.2px;">03s</div>
<div style="left:2220.7px;top:1063.0px;width:1.6px;height:7.0px;background:#b0b0b0;"></div>
<div class="t ls" style="left:2577.0px;top:1042.3px;height:20.3px;line-height:20.3px;font-size:15.6px;color:#a8a8a8;letter-spacing:1.2px;">04s</div>
<div style="left:2591.7px;top:1063.0px;width:1.6px;height:7.0px;background:#b0b0b0;"></div>
<div class="t ls" style="left:2948.5px;top:1042.3px;height:20.3px;line-height:20.3px;font-size:15.6px;color:#a8a8a8;letter-spacing:1.2px;">05s</div>
<div style="left:2962.7px;top:1063.0px;width:1.6px;height:7.0px;background:#b0b0b0;"></div>
<div style="left:1097.0px;top:1069.8px;width:1877.0px;height:2.0px;background:#0f0f0f;"></div>
<div style="left:1107.0px;top:1071.8px;width:1856.5px;height:24.0px;background:#656565;"></div>
<div style="left:1097.5px;top:1071.8px;width:10.0px;height:24.0px;background:#2d8ceb;border-radius:7px 0 0 7px;"></div>
<div style="left:2963.5px;top:1071.8px;width:9.0px;height:24.0px;background:#2d8ceb;border-radius:0 6px 6px 0;"></div>
<div style="left:1108.0px;top:1096.0px;width:1855.5px;height:5.0px;background:#23b934;"></div>
<div style="left:1097.0px;top:1101.0px;width:1877.0px;height:2.0px;background:#141414;"></div>
<div style="left:1097.5px;top:1103px;width:1876.0px;height:140.5px;overflow:hidden;background:#383838;">
<div style="left:0.0px;top:14.3px;width:1876.0px;height:1.8px;background:#2a2a2a;"></div>
<div style="left:10.5px;top:-11.2px;width:1855.5px;height:24.6px;background:#555f95;"></div>
<div style="left:0.0px;top:45.6px;width:1876.0px;height:1.8px;background:#2a2a2a;"></div>
<div style="left:10.5px;top:20.0px;width:1855.5px;height:24.6px;background:#555f95;"></div>
<div style="left:0.0px;top:76.8px;width:1876.0px;height:1.8px;background:#2a2a2a;"></div>
<div style="left:10.5px;top:51.3px;width:1855.5px;height:24.6px;background:#555f95;"></div>
<div style="left:0.0px;top:108.1px;width:1876.0px;height:1.8px;background:#2a2a2a;"></div>
<div style="left:10.5px;top:82.5px;width:1855.5px;height:24.6px;background:#555f95;"></div>
<div style="left:0.0px;top:139.3px;width:1876.0px;height:1.8px;background:#2a2a2a;"></div>
<div style="left:10.5px;top:113.8px;width:1855.5px;height:24.6px;background:#555f95;"></div>
</div>
<div style="left:1097.5px;top:1243.5px;width:1876.0px;height:1.5px;background:#222222;"></div>
<div style="left:1097.5px;top:1245.0px;width:1876.0px;height:30.0px;background:#353535;"></div>
<div style="left:1097.5px;top:1275.0px;width:1876.0px;height:1.5px;background:#232323;"></div>
<svg style="left:1101.9px;top:1251.0px;" width="14.8" height="14" viewBox="0 0 14.8 14"><path d="M0 0 L14.8 0 L14.8 1.5 C11 3.5 10.4 5 10.4 7 C10.4 9 11 10.5 14.8 12.5 L14.8 14 L0 14 L0 12.5 C3.8 10.5 4.4 9 4.4 7 C4.4 5 3.8 3.5 0 1.5 Z" fill="#c8c8c8"/></svg>
<svg style="left:1472.6px;top:1251.0px;" width="14.8" height="14" viewBox="0 0 14.8 14"><path d="M0 0 L14.8 0 L14.8 1.5 C11 3.5 10.4 5 10.4 7 C10.4 9 11 10.5 14.8 12.5 L14.8 14 L0 14 L0 12.5 C3.8 10.5 4.4 9 4.4 7 C4.4 5 3.8 3.5 0 1.5 Z" fill="#c8c8c8"/></svg>
<svg style="left:1843.6px;top:1251.0px;" width="14.8" height="14" viewBox="0 0 14.8 14"><path d="M0 0 L14.8 0 L14.8 1.5 C11 3.5 10.4 5 10.4 7 C10.4 9 11 10.5 14.8 12.5 L14.8 14 L0 14 L0 12.5 C3.8 10.5 4.4 9 4.4 7 C4.4 5 3.8 3.5 0 1.5 Z" fill="#c8c8c8"/></svg>
<svg style="left:2214.6px;top:1251.0px;" width="14.8" height="14" viewBox="0 0 14.8 14"><path d="M0 0 L14.8 0 L14.8 1.5 C11 3.5 10.4 5 10.4 7 C10.4 9 11 10.5 14.8 12.5 L14.8 14 L0 14 L0 12.5 C3.8 10.5 4.4 9 4.4 7 C4.4 5 3.8 3.5 0 1.5 Z" fill="#c8c8c8"/></svg>
<svg style="left:2585.6px;top:1251.0px;" width="14.8" height="14" viewBox="0 0 14.8 14"><path d="M0 0 L14.8 0 L14.8 1.5 C11 3.5 10.4 5 10.4 7 C10.4 9 11 10.5 14.8 12.5 L14.8 14 L0 14 L0 12.5 C3.8 10.5 4.4 9 4.4 7 C4.4 5 3.8 3.5 0 1.5 Z" fill="#c8c8c8"/></svg>
<div style="left:1097.5px;top:1276.5px;width:10.5px;height:148.0px;background:#282828;"></div>
<div style="left:1108.0px;top:1276.5px;width:1865.5px;height:148.0px;background:#323232;"></div>
<div style="left:1097.5px;top:1424.5px;width:1876.0px;height:1.5px;background:#222222;"></div>
<div style="left:1097.5px;top:1426.0px;width:1876.0px;height:29.5px;background:#353535;"></div>
<div style="left:1097.5px;top:1455.5px;width:1876.0px;height:1.5px;background:#222222;"></div>
<div style="left:1097.5px;top:1457.0px;width:10.5px;height:89.0px;background:#282828;"></div>
<div style="left:1108.0px;top:1457.0px;width:1865.5px;height:89.0px;background:#323232;"></div>
<div class="t lm" style="left:1119.5px;top:1277.0px;height:25.1px;line-height:25.1px;font-size:19.27px;color:#b6b6b6;">delay = 0.5;</div>
<div class="t lm" style="left:1119.5px;top:1323.5px;height:25.1px;line-height:25.1px;font-size:19.27px;color:#b6b6b6;">d = delay*thisComp.frameDuration*(index - 1);</div>
<div class="t lm" style="left:1119.5px;top:1372.0px;height:25.1px;line-height:25.1px;font-size:19.27px;color:#b6b6b6;">thisComp.layer(1).position.valueAtTime(time - d)</div>
<div class="t lm" style="left:1119.5px;top:1458.5px;height:25.1px;line-height:25.1px;font-size:19.27px;color:#b6b6b6;">opacityFactor =.80;</div>
<div class="t lm" style="left:1119.5px;top:1504.5px;height:25.1px;line-height:25.1px;font-size:19.27px;color:#b6b6b6;">Math.pow(opacityFactor,index - 1)*100</div>
<div style="left:2973.5px;top:1071.5px;width:26.5px;height:474.5px;background:#232323;"></div>
<div style="left:2973.5px;top:1101.0px;width:26.5px;height:2.0px;background:#141414;"></div>
<div style="left:2973.5px;top:1103.0px;width:1.6px;height:26.0px;background:#111111;"></div>
<svg style="left:2980.0px;top:1075.0px;" width="18" height="21" viewBox="0 0 18 21"><path d="M0 0 L18 0 L18 14 L9 21 L0 14 Z" fill="#b8b8b8"/></svg>
<svg style="left:2977.0px;top:1106.0px;" width="22" height="22" viewBox="0 0 22 22"><rect x="9" y="5" width="13" height="10" fill="#b8b8b8"/><path d="M10 1 L1 12 L10 12" fill="none" stroke="#b8b8b8" stroke-width="1.6"/><circle cx="10.5" cy="15.5" r="4" fill="#232323" stroke="#b8b8b8" stroke-width="1.6"/></svg>
<div style="left:2963.2px;top:1103.0px;width:10.5px;height:443.0px;background:#272727;"></div>
<div style="left:2973.7px;top:1243.0px;width:1.4px;height:303.0px;background:#1c1c1c;"></div>
<div style="left:2975.5px;top:1247.0px;width:23.0px;height:299.0px;background:#313131;border-radius:11px 11px 0 0;"></div>
<div style="left:2998.6px;top:1071.5px;width:1.4px;height:474.5px;background:#1e1e1e;"></div>
<div style="left:2074.7px;top:1103.0px;width:12.0px;height:443.0px;background:rgba(255,255,255,0.09);"></div>
<div style="left:2071.7px;top:1026.0px;width:3.0px;height:13.3px;background:#8fb4dd;"></div>
<svg style="left:2063.7px;top:1048.0px;" width="19" height="23" viewBox="0 0 19 23"><path d="M0.5 0 L18.5 0 L18.5 11 L9.5 22.5 L0.5 11 Z" fill="#3a8fe8"/><path d="M7.5 10 L11.5 10 M9.5 10 L9.5 21" stroke="#0d2540" stroke-width="1.2"/></svg>
<div style="left:2072.2px;top:1068.0px;width:2.0px;height:478.0px;background:#3a8fe8;"></div>
<svg style="left:2067.0px;top:1428.0px;" width="12" height="19" viewBox="0 0 12 19"><path d="M1 1 L11 1 M1 18 L11 18 M6 1 L6 18" stroke="#e6e6e6" stroke-width="2"/></svg>
</body></html>
